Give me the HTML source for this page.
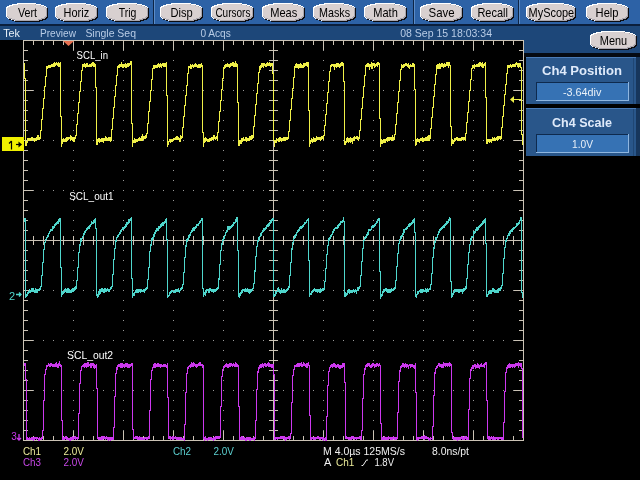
<!DOCTYPE html>
<html><head><meta charset="utf-8"><style>
html,body{margin:0;padding:0;width:640px;height:480px;overflow:hidden;background:#000}
svg{position:absolute;left:0;top:0;display:block;will-change:transform}
text{font-family:"Liberation Sans",sans-serif}
</style></head><body>
<svg width="640" height="480" viewBox="0 0 640 480">
<g shape-rendering="crispEdges">
<rect x="0" y="0" width="640" height="24" fill="#2d62a6"/><rect x="0" y="24" width="640" height="2" fill="#0b1f3c"/><rect x="0" y="26" width="640" height="14" fill="#1d4779"/><rect x="524" y="40" width="116" height="13" fill="#1d4779"/><rect x="524" y="53" width="116" height="4" fill="#050a12"/><rect x="153" y="0" width="1" height="24" fill="#0d2444"/><rect x="154" y="0" width="1" height="24" fill="#5b8cc8"/><rect x="413" y="0" width="1" height="24" fill="#0d2444"/><rect x="414" y="0" width="1" height="24" fill="#5b8cc8"/><rect x="518" y="0" width="1" height="24" fill="#0d2444"/><rect x="519" y="0" width="1" height="24" fill="#5b8cc8"/><path fill="#0c0c10" d="M18 4h19v1h-19zM13 5h29v1h-29zM10 6h35v1h-35zM8 7h39v1h-39zM7 8h41v1h-41zM7 9h41v1h-41zM7 10h41v1h-41zM7 11h41v1h-41zM7 12h41v1h-41zM7 13h41v1h-41zM7 14h41v1h-41zM7 15h41v1h-41zM7 16h41v1h-41zM7 17h41v1h-41zM8 18h39v1h-39zM9 19h37v1h-37zM12 20h31v1h-31zM15 21h25v1h-25z"/><path fill="#ffffff" d="M17 3h19v1h-19zM12 4h29v1h-29zM9 5h35v1h-35zM7 6h39v1h-39zM6 7h41v1h-41zM6 8h41v1h-41zM6 9h41v1h-41zM6 10h41v1h-41zM6 11h41v1h-41zM6 12h41v1h-41zM6 13h41v1h-41zM6 14h41v1h-41zM6 15h41v1h-41zM6 16h41v1h-41zM7 17h39v1h-39zM8 18h37v1h-37zM11 19h31v1h-31zM14 20h25v1h-25z"/><path fill="#a9a6ae" d="M18 4h18v1h-18zM13 5h28v1h-28zM10 6h34v1h-34zM8 7h38v1h-38zM7 8h40v1h-40zM7 9h40v1h-40zM7 10h40v1h-40zM7 11h40v1h-40zM7 12h40v1h-40zM7 13h40v1h-40zM7 14h40v1h-40zM7 15h40v1h-40zM7 16h40v1h-40zM8 17h38v1h-38zM9 18h36v1h-36zM12 19h30v1h-30zM15 20h24v1h-24z"/><path fill="#d8d0d0" d="M18 4h17v1h-17zM13 5h27v1h-27zM10 6h33v1h-33zM8 7h37v1h-37zM7 8h39v1h-39zM7 9h39v1h-39zM7 10h39v1h-39zM7 11h39v1h-39zM7 12h39v1h-39zM7 13h39v1h-39zM7 14h39v1h-39zM7 15h39v1h-39zM8 16h37v1h-37zM9 17h35v1h-35zM12 18h29v1h-29zM15 19h23v1h-23z"/><path fill="#0c0c10" d="M67 4h20v1h-20zM62 5h30v1h-30zM59 6h36v1h-36zM57 7h40v1h-40zM56 8h42v1h-42zM56 9h42v1h-42zM56 10h42v1h-42zM56 11h42v1h-42zM56 12h42v1h-42zM56 13h42v1h-42zM56 14h42v1h-42zM56 15h42v1h-42zM56 16h42v1h-42zM56 17h42v1h-42zM57 18h40v1h-40zM58 19h38v1h-38zM61 20h32v1h-32zM64 21h26v1h-26z"/><path fill="#ffffff" d="M66 3h20v1h-20zM61 4h30v1h-30zM58 5h36v1h-36zM56 6h40v1h-40zM55 7h42v1h-42zM55 8h42v1h-42zM55 9h42v1h-42zM55 10h42v1h-42zM55 11h42v1h-42zM55 12h42v1h-42zM55 13h42v1h-42zM55 14h42v1h-42zM55 15h42v1h-42zM55 16h42v1h-42zM56 17h40v1h-40zM57 18h38v1h-38zM60 19h32v1h-32zM63 20h26v1h-26z"/><path fill="#a9a6ae" d="M67 4h19v1h-19zM62 5h29v1h-29zM59 6h35v1h-35zM57 7h39v1h-39zM56 8h41v1h-41zM56 9h41v1h-41zM56 10h41v1h-41zM56 11h41v1h-41zM56 12h41v1h-41zM56 13h41v1h-41zM56 14h41v1h-41zM56 15h41v1h-41zM56 16h41v1h-41zM57 17h39v1h-39zM58 18h37v1h-37zM61 19h31v1h-31zM64 20h25v1h-25z"/><path fill="#d8d0d0" d="M67 4h18v1h-18zM62 5h28v1h-28zM59 6h34v1h-34zM57 7h38v1h-38zM56 8h40v1h-40zM56 9h40v1h-40zM56 10h40v1h-40zM56 11h40v1h-40zM56 12h40v1h-40zM56 13h40v1h-40zM56 14h40v1h-40zM56 15h40v1h-40zM57 16h38v1h-38zM58 17h36v1h-36zM61 18h30v1h-30zM64 19h24v1h-24z"/><path fill="#0c0c10" d="M118 4h20v1h-20zM113 5h30v1h-30zM110 6h36v1h-36zM108 7h40v1h-40zM107 8h42v1h-42zM107 9h42v1h-42zM107 10h42v1h-42zM107 11h42v1h-42zM107 12h42v1h-42zM107 13h42v1h-42zM107 14h42v1h-42zM107 15h42v1h-42zM107 16h42v1h-42zM107 17h42v1h-42zM108 18h40v1h-40zM109 19h38v1h-38zM112 20h32v1h-32zM115 21h26v1h-26z"/><path fill="#ffffff" d="M117 3h20v1h-20zM112 4h30v1h-30zM109 5h36v1h-36zM107 6h40v1h-40zM106 7h42v1h-42zM106 8h42v1h-42zM106 9h42v1h-42zM106 10h42v1h-42zM106 11h42v1h-42zM106 12h42v1h-42zM106 13h42v1h-42zM106 14h42v1h-42zM106 15h42v1h-42zM106 16h42v1h-42zM107 17h40v1h-40zM108 18h38v1h-38zM111 19h32v1h-32zM114 20h26v1h-26z"/><path fill="#a9a6ae" d="M118 4h19v1h-19zM113 5h29v1h-29zM110 6h35v1h-35zM108 7h39v1h-39zM107 8h41v1h-41zM107 9h41v1h-41zM107 10h41v1h-41zM107 11h41v1h-41zM107 12h41v1h-41zM107 13h41v1h-41zM107 14h41v1h-41zM107 15h41v1h-41zM107 16h41v1h-41zM108 17h39v1h-39zM109 18h37v1h-37zM112 19h31v1h-31zM115 20h25v1h-25z"/><path fill="#d8d0d0" d="M118 4h18v1h-18zM113 5h28v1h-28zM110 6h34v1h-34zM108 7h38v1h-38zM107 8h40v1h-40zM107 9h40v1h-40zM107 10h40v1h-40zM107 11h40v1h-40zM107 12h40v1h-40zM107 13h40v1h-40zM107 14h40v1h-40zM107 15h40v1h-40zM108 16h38v1h-38zM109 17h36v1h-36zM112 18h30v1h-30zM115 19h24v1h-24z"/><path fill="#0c0c10" d="M172 4h20v1h-20zM167 5h30v1h-30zM164 6h36v1h-36zM162 7h40v1h-40zM161 8h42v1h-42zM161 9h42v1h-42zM161 10h42v1h-42zM161 11h42v1h-42zM161 12h42v1h-42zM161 13h42v1h-42zM161 14h42v1h-42zM161 15h42v1h-42zM161 16h42v1h-42zM161 17h42v1h-42zM162 18h40v1h-40zM163 19h38v1h-38zM166 20h32v1h-32zM169 21h26v1h-26z"/><path fill="#ffffff" d="M171 3h20v1h-20zM166 4h30v1h-30zM163 5h36v1h-36zM161 6h40v1h-40zM160 7h42v1h-42zM160 8h42v1h-42zM160 9h42v1h-42zM160 10h42v1h-42zM160 11h42v1h-42zM160 12h42v1h-42zM160 13h42v1h-42zM160 14h42v1h-42zM160 15h42v1h-42zM160 16h42v1h-42zM161 17h40v1h-40zM162 18h38v1h-38zM165 19h32v1h-32zM168 20h26v1h-26z"/><path fill="#a9a6ae" d="M172 4h19v1h-19zM167 5h29v1h-29zM164 6h35v1h-35zM162 7h39v1h-39zM161 8h41v1h-41zM161 9h41v1h-41zM161 10h41v1h-41zM161 11h41v1h-41zM161 12h41v1h-41zM161 13h41v1h-41zM161 14h41v1h-41zM161 15h41v1h-41zM161 16h41v1h-41zM162 17h39v1h-39zM163 18h37v1h-37zM166 19h31v1h-31zM169 20h25v1h-25z"/><path fill="#d8d0d0" d="M172 4h18v1h-18zM167 5h28v1h-28zM164 6h34v1h-34zM162 7h38v1h-38zM161 8h40v1h-40zM161 9h40v1h-40zM161 10h40v1h-40zM161 11h40v1h-40zM161 12h40v1h-40zM161 13h40v1h-40zM161 14h40v1h-40zM161 15h40v1h-40zM162 16h38v1h-38zM163 17h36v1h-36zM166 18h30v1h-30zM169 19h24v1h-24z"/><path fill="#0c0c10" d="M223 4h20v1h-20zM218 5h30v1h-30zM215 6h36v1h-36zM213 7h40v1h-40zM212 8h42v1h-42zM212 9h42v1h-42zM212 10h42v1h-42zM212 11h42v1h-42zM212 12h42v1h-42zM212 13h42v1h-42zM212 14h42v1h-42zM212 15h42v1h-42zM212 16h42v1h-42zM212 17h42v1h-42zM213 18h40v1h-40zM214 19h38v1h-38zM217 20h32v1h-32zM220 21h26v1h-26z"/><path fill="#ffffff" d="M222 3h20v1h-20zM217 4h30v1h-30zM214 5h36v1h-36zM212 6h40v1h-40zM211 7h42v1h-42zM211 8h42v1h-42zM211 9h42v1h-42zM211 10h42v1h-42zM211 11h42v1h-42zM211 12h42v1h-42zM211 13h42v1h-42zM211 14h42v1h-42zM211 15h42v1h-42zM211 16h42v1h-42zM212 17h40v1h-40zM213 18h38v1h-38zM216 19h32v1h-32zM219 20h26v1h-26z"/><path fill="#a9a6ae" d="M223 4h19v1h-19zM218 5h29v1h-29zM215 6h35v1h-35zM213 7h39v1h-39zM212 8h41v1h-41zM212 9h41v1h-41zM212 10h41v1h-41zM212 11h41v1h-41zM212 12h41v1h-41zM212 13h41v1h-41zM212 14h41v1h-41zM212 15h41v1h-41zM212 16h41v1h-41zM213 17h39v1h-39zM214 18h37v1h-37zM217 19h31v1h-31zM220 20h25v1h-25z"/><path fill="#d8d0d0" d="M223 4h18v1h-18zM218 5h28v1h-28zM215 6h34v1h-34zM213 7h38v1h-38zM212 8h40v1h-40zM212 9h40v1h-40zM212 10h40v1h-40zM212 11h40v1h-40zM212 12h40v1h-40zM212 13h40v1h-40zM212 14h40v1h-40zM212 15h40v1h-40zM213 16h38v1h-38zM214 17h36v1h-36zM217 18h30v1h-30zM220 19h24v1h-24z"/><path fill="#0c0c10" d="M274 4h20v1h-20zM269 5h30v1h-30zM266 6h36v1h-36zM264 7h40v1h-40zM263 8h42v1h-42zM263 9h42v1h-42zM263 10h42v1h-42zM263 11h42v1h-42zM263 12h42v1h-42zM263 13h42v1h-42zM263 14h42v1h-42zM263 15h42v1h-42zM263 16h42v1h-42zM263 17h42v1h-42zM264 18h40v1h-40zM265 19h38v1h-38zM268 20h32v1h-32zM271 21h26v1h-26z"/><path fill="#ffffff" d="M273 3h20v1h-20zM268 4h30v1h-30zM265 5h36v1h-36zM263 6h40v1h-40zM262 7h42v1h-42zM262 8h42v1h-42zM262 9h42v1h-42zM262 10h42v1h-42zM262 11h42v1h-42zM262 12h42v1h-42zM262 13h42v1h-42zM262 14h42v1h-42zM262 15h42v1h-42zM262 16h42v1h-42zM263 17h40v1h-40zM264 18h38v1h-38zM267 19h32v1h-32zM270 20h26v1h-26z"/><path fill="#a9a6ae" d="M274 4h19v1h-19zM269 5h29v1h-29zM266 6h35v1h-35zM264 7h39v1h-39zM263 8h41v1h-41zM263 9h41v1h-41zM263 10h41v1h-41zM263 11h41v1h-41zM263 12h41v1h-41zM263 13h41v1h-41zM263 14h41v1h-41zM263 15h41v1h-41zM263 16h41v1h-41zM264 17h39v1h-39zM265 18h37v1h-37zM268 19h31v1h-31zM271 20h25v1h-25z"/><path fill="#d8d0d0" d="M274 4h18v1h-18zM269 5h28v1h-28zM266 6h34v1h-34zM264 7h38v1h-38zM263 8h40v1h-40zM263 9h40v1h-40zM263 10h40v1h-40zM263 11h40v1h-40zM263 12h40v1h-40zM263 13h40v1h-40zM263 14h40v1h-40zM263 15h40v1h-40zM264 16h38v1h-38zM265 17h36v1h-36zM268 18h30v1h-30zM271 19h24v1h-24z"/><path fill="#0c0c10" d="M325 4h20v1h-20zM320 5h30v1h-30zM317 6h36v1h-36zM315 7h40v1h-40zM314 8h42v1h-42zM314 9h42v1h-42zM314 10h42v1h-42zM314 11h42v1h-42zM314 12h42v1h-42zM314 13h42v1h-42zM314 14h42v1h-42zM314 15h42v1h-42zM314 16h42v1h-42zM314 17h42v1h-42zM315 18h40v1h-40zM316 19h38v1h-38zM319 20h32v1h-32zM322 21h26v1h-26z"/><path fill="#ffffff" d="M324 3h20v1h-20zM319 4h30v1h-30zM316 5h36v1h-36zM314 6h40v1h-40zM313 7h42v1h-42zM313 8h42v1h-42zM313 9h42v1h-42zM313 10h42v1h-42zM313 11h42v1h-42zM313 12h42v1h-42zM313 13h42v1h-42zM313 14h42v1h-42zM313 15h42v1h-42zM313 16h42v1h-42zM314 17h40v1h-40zM315 18h38v1h-38zM318 19h32v1h-32zM321 20h26v1h-26z"/><path fill="#a9a6ae" d="M325 4h19v1h-19zM320 5h29v1h-29zM317 6h35v1h-35zM315 7h39v1h-39zM314 8h41v1h-41zM314 9h41v1h-41zM314 10h41v1h-41zM314 11h41v1h-41zM314 12h41v1h-41zM314 13h41v1h-41zM314 14h41v1h-41zM314 15h41v1h-41zM314 16h41v1h-41zM315 17h39v1h-39zM316 18h37v1h-37zM319 19h31v1h-31zM322 20h25v1h-25z"/><path fill="#d8d0d0" d="M325 4h18v1h-18zM320 5h28v1h-28zM317 6h34v1h-34zM315 7h38v1h-38zM314 8h40v1h-40zM314 9h40v1h-40zM314 10h40v1h-40zM314 11h40v1h-40zM314 12h40v1h-40zM314 13h40v1h-40zM314 14h40v1h-40zM314 15h40v1h-40zM315 16h38v1h-38zM316 17h36v1h-36zM319 18h30v1h-30zM322 19h24v1h-24z"/><path fill="#0c0c10" d="M376 4h20v1h-20zM371 5h30v1h-30zM368 6h36v1h-36zM366 7h40v1h-40zM365 8h42v1h-42zM365 9h42v1h-42zM365 10h42v1h-42zM365 11h42v1h-42zM365 12h42v1h-42zM365 13h42v1h-42zM365 14h42v1h-42zM365 15h42v1h-42zM365 16h42v1h-42zM365 17h42v1h-42zM366 18h40v1h-40zM367 19h38v1h-38zM370 20h32v1h-32zM373 21h26v1h-26z"/><path fill="#ffffff" d="M375 3h20v1h-20zM370 4h30v1h-30zM367 5h36v1h-36zM365 6h40v1h-40zM364 7h42v1h-42zM364 8h42v1h-42zM364 9h42v1h-42zM364 10h42v1h-42zM364 11h42v1h-42zM364 12h42v1h-42zM364 13h42v1h-42zM364 14h42v1h-42zM364 15h42v1h-42zM364 16h42v1h-42zM365 17h40v1h-40zM366 18h38v1h-38zM369 19h32v1h-32zM372 20h26v1h-26z"/><path fill="#a9a6ae" d="M376 4h19v1h-19zM371 5h29v1h-29zM368 6h35v1h-35zM366 7h39v1h-39zM365 8h41v1h-41zM365 9h41v1h-41zM365 10h41v1h-41zM365 11h41v1h-41zM365 12h41v1h-41zM365 13h41v1h-41zM365 14h41v1h-41zM365 15h41v1h-41zM365 16h41v1h-41zM366 17h39v1h-39zM367 18h37v1h-37zM370 19h31v1h-31zM373 20h25v1h-25z"/><path fill="#d8d0d0" d="M376 4h18v1h-18zM371 5h28v1h-28zM368 6h34v1h-34zM366 7h38v1h-38zM365 8h40v1h-40zM365 9h40v1h-40zM365 10h40v1h-40zM365 11h40v1h-40zM365 12h40v1h-40zM365 13h40v1h-40zM365 14h40v1h-40zM365 15h40v1h-40zM366 16h38v1h-38zM367 17h36v1h-36zM370 18h30v1h-30zM373 19h24v1h-24z"/><path fill="#0c0c10" d="M432 4h20v1h-20zM427 5h30v1h-30zM424 6h36v1h-36zM422 7h40v1h-40zM421 8h42v1h-42zM421 9h42v1h-42zM421 10h42v1h-42zM421 11h42v1h-42zM421 12h42v1h-42zM421 13h42v1h-42zM421 14h42v1h-42zM421 15h42v1h-42zM421 16h42v1h-42zM421 17h42v1h-42zM422 18h40v1h-40zM423 19h38v1h-38zM426 20h32v1h-32zM429 21h26v1h-26z"/><path fill="#ffffff" d="M431 3h20v1h-20zM426 4h30v1h-30zM423 5h36v1h-36zM421 6h40v1h-40zM420 7h42v1h-42zM420 8h42v1h-42zM420 9h42v1h-42zM420 10h42v1h-42zM420 11h42v1h-42zM420 12h42v1h-42zM420 13h42v1h-42zM420 14h42v1h-42zM420 15h42v1h-42zM420 16h42v1h-42zM421 17h40v1h-40zM422 18h38v1h-38zM425 19h32v1h-32zM428 20h26v1h-26z"/><path fill="#a9a6ae" d="M432 4h19v1h-19zM427 5h29v1h-29zM424 6h35v1h-35zM422 7h39v1h-39zM421 8h41v1h-41zM421 9h41v1h-41zM421 10h41v1h-41zM421 11h41v1h-41zM421 12h41v1h-41zM421 13h41v1h-41zM421 14h41v1h-41zM421 15h41v1h-41zM421 16h41v1h-41zM422 17h39v1h-39zM423 18h37v1h-37zM426 19h31v1h-31zM429 20h25v1h-25z"/><path fill="#d8d0d0" d="M432 4h18v1h-18zM427 5h28v1h-28zM424 6h34v1h-34zM422 7h38v1h-38zM421 8h40v1h-40zM421 9h40v1h-40zM421 10h40v1h-40zM421 11h40v1h-40zM421 12h40v1h-40zM421 13h40v1h-40zM421 14h40v1h-40zM421 15h40v1h-40zM422 16h38v1h-38zM423 17h36v1h-36zM426 18h30v1h-30zM429 19h24v1h-24z"/><path fill="#0c0c10" d="M483 4h20v1h-20zM478 5h30v1h-30zM475 6h36v1h-36zM473 7h40v1h-40zM472 8h42v1h-42zM472 9h42v1h-42zM472 10h42v1h-42zM472 11h42v1h-42zM472 12h42v1h-42zM472 13h42v1h-42zM472 14h42v1h-42zM472 15h42v1h-42zM472 16h42v1h-42zM472 17h42v1h-42zM473 18h40v1h-40zM474 19h38v1h-38zM477 20h32v1h-32zM480 21h26v1h-26z"/><path fill="#ffffff" d="M482 3h20v1h-20zM477 4h30v1h-30zM474 5h36v1h-36zM472 6h40v1h-40zM471 7h42v1h-42zM471 8h42v1h-42zM471 9h42v1h-42zM471 10h42v1h-42zM471 11h42v1h-42zM471 12h42v1h-42zM471 13h42v1h-42zM471 14h42v1h-42zM471 15h42v1h-42zM471 16h42v1h-42zM472 17h40v1h-40zM473 18h38v1h-38zM476 19h32v1h-32zM479 20h26v1h-26z"/><path fill="#a9a6ae" d="M483 4h19v1h-19zM478 5h29v1h-29zM475 6h35v1h-35zM473 7h39v1h-39zM472 8h41v1h-41zM472 9h41v1h-41zM472 10h41v1h-41zM472 11h41v1h-41zM472 12h41v1h-41zM472 13h41v1h-41zM472 14h41v1h-41zM472 15h41v1h-41zM472 16h41v1h-41zM473 17h39v1h-39zM474 18h37v1h-37zM477 19h31v1h-31zM480 20h25v1h-25z"/><path fill="#d8d0d0" d="M483 4h18v1h-18zM478 5h28v1h-28zM475 6h34v1h-34zM473 7h38v1h-38zM472 8h40v1h-40zM472 9h40v1h-40zM472 10h40v1h-40zM472 11h40v1h-40zM472 12h40v1h-40zM472 13h40v1h-40zM472 14h40v1h-40zM472 15h40v1h-40zM473 16h38v1h-38zM474 17h36v1h-36zM477 18h30v1h-30zM480 19h24v1h-24z"/><path fill="#0c0c10" d="M538 4h27v1h-27zM533 5h37v1h-37zM530 6h43v1h-43zM528 7h47v1h-47zM527 8h49v1h-49zM527 9h49v1h-49zM527 10h49v1h-49zM527 11h49v1h-49zM527 12h49v1h-49zM527 13h49v1h-49zM527 14h49v1h-49zM527 15h49v1h-49zM527 16h49v1h-49zM527 17h49v1h-49zM528 18h47v1h-47zM529 19h45v1h-45zM532 20h39v1h-39zM535 21h33v1h-33z"/><path fill="#ffffff" d="M537 3h27v1h-27zM532 4h37v1h-37zM529 5h43v1h-43zM527 6h47v1h-47zM526 7h49v1h-49zM526 8h49v1h-49zM526 9h49v1h-49zM526 10h49v1h-49zM526 11h49v1h-49zM526 12h49v1h-49zM526 13h49v1h-49zM526 14h49v1h-49zM526 15h49v1h-49zM526 16h49v1h-49zM527 17h47v1h-47zM528 18h45v1h-45zM531 19h39v1h-39zM534 20h33v1h-33z"/><path fill="#a9a6ae" d="M538 4h26v1h-26zM533 5h36v1h-36zM530 6h42v1h-42zM528 7h46v1h-46zM527 8h48v1h-48zM527 9h48v1h-48zM527 10h48v1h-48zM527 11h48v1h-48zM527 12h48v1h-48zM527 13h48v1h-48zM527 14h48v1h-48zM527 15h48v1h-48zM527 16h48v1h-48zM528 17h46v1h-46zM529 18h44v1h-44zM532 19h38v1h-38zM535 20h32v1h-32z"/><path fill="#d8d0d0" d="M538 4h25v1h-25zM533 5h35v1h-35zM530 6h41v1h-41zM528 7h45v1h-45zM527 8h47v1h-47zM527 9h47v1h-47zM527 10h47v1h-47zM527 11h47v1h-47zM527 12h47v1h-47zM527 13h47v1h-47zM527 14h47v1h-47zM527 15h47v1h-47zM528 16h45v1h-45zM529 17h43v1h-43zM532 18h37v1h-37zM535 19h31v1h-31z"/><path fill="#0c0c10" d="M598 4h20v1h-20zM593 5h30v1h-30zM590 6h36v1h-36zM588 7h40v1h-40zM587 8h42v1h-42zM587 9h42v1h-42zM587 10h42v1h-42zM587 11h42v1h-42zM587 12h42v1h-42zM587 13h42v1h-42zM587 14h42v1h-42zM587 15h42v1h-42zM587 16h42v1h-42zM587 17h42v1h-42zM588 18h40v1h-40zM589 19h38v1h-38zM592 20h32v1h-32zM595 21h26v1h-26z"/><path fill="#ffffff" d="M597 3h20v1h-20zM592 4h30v1h-30zM589 5h36v1h-36zM587 6h40v1h-40zM586 7h42v1h-42zM586 8h42v1h-42zM586 9h42v1h-42zM586 10h42v1h-42zM586 11h42v1h-42zM586 12h42v1h-42zM586 13h42v1h-42zM586 14h42v1h-42zM586 15h42v1h-42zM586 16h42v1h-42zM587 17h40v1h-40zM588 18h38v1h-38zM591 19h32v1h-32zM594 20h26v1h-26z"/><path fill="#a9a6ae" d="M598 4h19v1h-19zM593 5h29v1h-29zM590 6h35v1h-35zM588 7h39v1h-39zM587 8h41v1h-41zM587 9h41v1h-41zM587 10h41v1h-41zM587 11h41v1h-41zM587 12h41v1h-41zM587 13h41v1h-41zM587 14h41v1h-41zM587 15h41v1h-41zM587 16h41v1h-41zM588 17h39v1h-39zM589 18h37v1h-37zM592 19h31v1h-31zM595 20h25v1h-25z"/><path fill="#d8d0d0" d="M598 4h18v1h-18zM593 5h28v1h-28zM590 6h34v1h-34zM588 7h38v1h-38zM587 8h40v1h-40zM587 9h40v1h-40zM587 10h40v1h-40zM587 11h40v1h-40zM587 12h40v1h-40zM587 13h40v1h-40zM587 14h40v1h-40zM587 15h40v1h-40zM588 16h38v1h-38zM589 17h36v1h-36zM592 18h30v1h-30zM595 19h24v1h-24z"/><path fill="#0c0c10" d="M602 32h24v1h-24zM597 33h34v1h-34zM594 34h40v1h-40zM592 35h44v1h-44zM591 36h46v1h-46zM591 37h46v1h-46zM591 38h46v1h-46zM591 39h46v1h-46zM591 40h46v1h-46zM591 41h46v1h-46zM591 42h46v1h-46zM591 43h46v1h-46zM591 44h46v1h-46zM591 45h46v1h-46zM592 46h44v1h-44zM593 47h42v1h-42zM596 48h36v1h-36zM599 49h30v1h-30z"/><path fill="#ffffff" d="M601 31h24v1h-24zM596 32h34v1h-34zM593 33h40v1h-40zM591 34h44v1h-44zM590 35h46v1h-46zM590 36h46v1h-46zM590 37h46v1h-46zM590 38h46v1h-46zM590 39h46v1h-46zM590 40h46v1h-46zM590 41h46v1h-46zM590 42h46v1h-46zM590 43h46v1h-46zM590 44h46v1h-46zM591 45h44v1h-44zM592 46h42v1h-42zM595 47h36v1h-36zM598 48h30v1h-30z"/><path fill="#a9a6ae" d="M602 32h23v1h-23zM597 33h33v1h-33zM594 34h39v1h-39zM592 35h43v1h-43zM591 36h45v1h-45zM591 37h45v1h-45zM591 38h45v1h-45zM591 39h45v1h-45zM591 40h45v1h-45zM591 41h45v1h-45zM591 42h45v1h-45zM591 43h45v1h-45zM591 44h45v1h-45zM592 45h43v1h-43zM593 46h41v1h-41zM596 47h35v1h-35zM599 48h29v1h-29z"/><path fill="#d8d0d0" d="M602 32h22v1h-22zM597 33h32v1h-32zM594 34h38v1h-38zM592 35h42v1h-42zM591 36h44v1h-44zM591 37h44v1h-44zM591 38h44v1h-44zM591 39h44v1h-44zM591 40h44v1h-44zM591 41h44v1h-44zM591 42h44v1h-44zM591 43h44v1h-44zM592 44h42v1h-42zM593 45h40v1h-40zM596 46h34v1h-34zM599 47h28v1h-28z"/><rect x="526" y="57" width="110" height="47" fill="#29568a"/><rect x="526" y="57" width="110" height="1" fill="#4a7cb8"/><rect x="633" y="58" width="1" height="46" fill="#1f4674"/><rect x="636" y="57" width="4" height="47" fill="#17365c"/><rect x="524" y="104" width="116" height="4" fill="#000"/><rect x="526" y="108" width="110" height="48" fill="#29568a"/><rect x="526" y="108" width="110" height="1" fill="#4a7cb8"/><rect x="633" y="109" width="1" height="47" fill="#1f4674"/><rect x="636" y="108" width="4" height="48" fill="#17365c"/><rect x="536" y="82" width="93" height="19" fill="#8fb6e0"/><rect x="536" y="82" width="92" height="18" fill="#0e2a4e"/><rect x="537" y="83" width="91" height="17" fill="#3672b4"/><rect x="536" y="134" width="93" height="19" fill="#8fb6e0"/><rect x="536" y="134" width="92" height="18" fill="#0e2a4e"/><rect x="537" y="135" width="91" height="17" fill="#3672b4"/>
<path fill="#9a9a9a" d="M73 50h1v1h-1zM73 60h1v1h-1zM73 70h1v1h-1zM73 80h1v1h-1zM73 90h1v1h-1zM73 100h1v1h-1zM73 110h1v1h-1zM73 120h1v1h-1zM73 130h1v1h-1zM73 140h1v1h-1zM73 150h1v1h-1zM73 160h1v1h-1zM73 170h1v1h-1zM73 180h1v1h-1zM73 190h1v1h-1zM73 200h1v1h-1zM73 210h1v1h-1zM73 220h1v1h-1zM73 230h1v1h-1zM73 240h1v1h-1zM73 250h1v1h-1zM73 260h1v1h-1zM73 270h1v1h-1zM73 280h1v1h-1zM73 290h1v1h-1zM73 300h1v1h-1zM73 310h1v1h-1zM73 320h1v1h-1zM73 330h1v1h-1zM73 340h1v1h-1zM73 350h1v1h-1zM73 360h1v1h-1zM73 370h1v1h-1zM73 380h1v1h-1zM73 390h1v1h-1zM73 400h1v1h-1zM73 410h1v1h-1zM73 420h1v1h-1zM73 430h1v1h-1zM123 50h1v1h-1zM123 60h1v1h-1zM123 70h1v1h-1zM123 80h1v1h-1zM123 90h1v1h-1zM123 100h1v1h-1zM123 110h1v1h-1zM123 120h1v1h-1zM123 130h1v1h-1zM123 140h1v1h-1zM123 150h1v1h-1zM123 160h1v1h-1zM123 170h1v1h-1zM123 180h1v1h-1zM123 190h1v1h-1zM123 200h1v1h-1zM123 210h1v1h-1zM123 220h1v1h-1zM123 230h1v1h-1zM123 240h1v1h-1zM123 250h1v1h-1zM123 260h1v1h-1zM123 270h1v1h-1zM123 280h1v1h-1zM123 290h1v1h-1zM123 300h1v1h-1zM123 310h1v1h-1zM123 320h1v1h-1zM123 330h1v1h-1zM123 340h1v1h-1zM123 350h1v1h-1zM123 360h1v1h-1zM123 370h1v1h-1zM123 380h1v1h-1zM123 390h1v1h-1zM123 400h1v1h-1zM123 410h1v1h-1zM123 420h1v1h-1zM123 430h1v1h-1zM173 50h1v1h-1zM173 60h1v1h-1zM173 70h1v1h-1zM173 80h1v1h-1zM173 90h1v1h-1zM173 100h1v1h-1zM173 110h1v1h-1zM173 120h1v1h-1zM173 130h1v1h-1zM173 140h1v1h-1zM173 150h1v1h-1zM173 160h1v1h-1zM173 170h1v1h-1zM173 180h1v1h-1zM173 190h1v1h-1zM173 200h1v1h-1zM173 210h1v1h-1zM173 220h1v1h-1zM173 230h1v1h-1zM173 240h1v1h-1zM173 250h1v1h-1zM173 260h1v1h-1zM173 270h1v1h-1zM173 280h1v1h-1zM173 290h1v1h-1zM173 300h1v1h-1zM173 310h1v1h-1zM173 320h1v1h-1zM173 330h1v1h-1zM173 340h1v1h-1zM173 350h1v1h-1zM173 360h1v1h-1zM173 370h1v1h-1zM173 380h1v1h-1zM173 390h1v1h-1zM173 400h1v1h-1zM173 410h1v1h-1zM173 420h1v1h-1zM173 430h1v1h-1zM223 50h1v1h-1zM223 60h1v1h-1zM223 70h1v1h-1zM223 80h1v1h-1zM223 90h1v1h-1zM223 100h1v1h-1zM223 110h1v1h-1zM223 120h1v1h-1zM223 130h1v1h-1zM223 140h1v1h-1zM223 150h1v1h-1zM223 160h1v1h-1zM223 170h1v1h-1zM223 180h1v1h-1zM223 190h1v1h-1zM223 200h1v1h-1zM223 210h1v1h-1zM223 220h1v1h-1zM223 230h1v1h-1zM223 240h1v1h-1zM223 250h1v1h-1zM223 260h1v1h-1zM223 270h1v1h-1zM223 280h1v1h-1zM223 290h1v1h-1zM223 300h1v1h-1zM223 310h1v1h-1zM223 320h1v1h-1zM223 330h1v1h-1zM223 340h1v1h-1zM223 350h1v1h-1zM223 360h1v1h-1zM223 370h1v1h-1zM223 380h1v1h-1zM223 390h1v1h-1zM223 400h1v1h-1zM223 410h1v1h-1zM223 420h1v1h-1zM223 430h1v1h-1zM323 50h1v1h-1zM323 60h1v1h-1zM323 70h1v1h-1zM323 80h1v1h-1zM323 90h1v1h-1zM323 100h1v1h-1zM323 110h1v1h-1zM323 120h1v1h-1zM323 130h1v1h-1zM323 140h1v1h-1zM323 150h1v1h-1zM323 160h1v1h-1zM323 170h1v1h-1zM323 180h1v1h-1zM323 190h1v1h-1zM323 200h1v1h-1zM323 210h1v1h-1zM323 220h1v1h-1zM323 230h1v1h-1zM323 240h1v1h-1zM323 250h1v1h-1zM323 260h1v1h-1zM323 270h1v1h-1zM323 280h1v1h-1zM323 290h1v1h-1zM323 300h1v1h-1zM323 310h1v1h-1zM323 320h1v1h-1zM323 330h1v1h-1zM323 340h1v1h-1zM323 350h1v1h-1zM323 360h1v1h-1zM323 370h1v1h-1zM323 380h1v1h-1zM323 390h1v1h-1zM323 400h1v1h-1zM323 410h1v1h-1zM323 420h1v1h-1zM323 430h1v1h-1zM373 50h1v1h-1zM373 60h1v1h-1zM373 70h1v1h-1zM373 80h1v1h-1zM373 90h1v1h-1zM373 100h1v1h-1zM373 110h1v1h-1zM373 120h1v1h-1zM373 130h1v1h-1zM373 140h1v1h-1zM373 150h1v1h-1zM373 160h1v1h-1zM373 170h1v1h-1zM373 180h1v1h-1zM373 190h1v1h-1zM373 200h1v1h-1zM373 210h1v1h-1zM373 220h1v1h-1zM373 230h1v1h-1zM373 240h1v1h-1zM373 250h1v1h-1zM373 260h1v1h-1zM373 270h1v1h-1zM373 280h1v1h-1zM373 290h1v1h-1zM373 300h1v1h-1zM373 310h1v1h-1zM373 320h1v1h-1zM373 330h1v1h-1zM373 340h1v1h-1zM373 350h1v1h-1zM373 360h1v1h-1zM373 370h1v1h-1zM373 380h1v1h-1zM373 390h1v1h-1zM373 400h1v1h-1zM373 410h1v1h-1zM373 420h1v1h-1zM373 430h1v1h-1zM423 50h1v1h-1zM423 60h1v1h-1zM423 70h1v1h-1zM423 80h1v1h-1zM423 90h1v1h-1zM423 100h1v1h-1zM423 110h1v1h-1zM423 120h1v1h-1zM423 130h1v1h-1zM423 140h1v1h-1zM423 150h1v1h-1zM423 160h1v1h-1zM423 170h1v1h-1zM423 180h1v1h-1zM423 190h1v1h-1zM423 200h1v1h-1zM423 210h1v1h-1zM423 220h1v1h-1zM423 230h1v1h-1zM423 240h1v1h-1zM423 250h1v1h-1zM423 260h1v1h-1zM423 270h1v1h-1zM423 280h1v1h-1zM423 290h1v1h-1zM423 300h1v1h-1zM423 310h1v1h-1zM423 320h1v1h-1zM423 330h1v1h-1zM423 340h1v1h-1zM423 350h1v1h-1zM423 360h1v1h-1zM423 370h1v1h-1zM423 380h1v1h-1zM423 390h1v1h-1zM423 400h1v1h-1zM423 410h1v1h-1zM423 420h1v1h-1zM423 430h1v1h-1zM473 50h1v1h-1zM473 60h1v1h-1zM473 70h1v1h-1zM473 80h1v1h-1zM473 90h1v1h-1zM473 100h1v1h-1zM473 110h1v1h-1zM473 120h1v1h-1zM473 130h1v1h-1zM473 140h1v1h-1zM473 150h1v1h-1zM473 160h1v1h-1zM473 170h1v1h-1zM473 180h1v1h-1zM473 190h1v1h-1zM473 200h1v1h-1zM473 210h1v1h-1zM473 220h1v1h-1zM473 230h1v1h-1zM473 240h1v1h-1zM473 250h1v1h-1zM473 260h1v1h-1zM473 270h1v1h-1zM473 280h1v1h-1zM473 290h1v1h-1zM473 300h1v1h-1zM473 310h1v1h-1zM473 320h1v1h-1zM473 330h1v1h-1zM473 340h1v1h-1zM473 350h1v1h-1zM473 360h1v1h-1zM473 370h1v1h-1zM473 380h1v1h-1zM473 390h1v1h-1zM473 400h1v1h-1zM473 410h1v1h-1zM473 420h1v1h-1zM473 430h1v1h-1zM33 90h1v1h-1zM43 90h1v1h-1zM53 90h1v1h-1zM63 90h1v1h-1zM73 90h1v1h-1zM83 90h1v1h-1zM93 90h1v1h-1zM103 90h1v1h-1zM113 90h1v1h-1zM123 90h1v1h-1zM133 90h1v1h-1zM143 90h1v1h-1zM153 90h1v1h-1zM163 90h1v1h-1zM173 90h1v1h-1zM183 90h1v1h-1zM193 90h1v1h-1zM203 90h1v1h-1zM213 90h1v1h-1zM223 90h1v1h-1zM233 90h1v1h-1zM243 90h1v1h-1zM253 90h1v1h-1zM263 90h1v1h-1zM273 90h1v1h-1zM283 90h1v1h-1zM293 90h1v1h-1zM303 90h1v1h-1zM313 90h1v1h-1zM323 90h1v1h-1zM333 90h1v1h-1zM343 90h1v1h-1zM353 90h1v1h-1zM363 90h1v1h-1zM373 90h1v1h-1zM383 90h1v1h-1zM393 90h1v1h-1zM403 90h1v1h-1zM413 90h1v1h-1zM423 90h1v1h-1zM433 90h1v1h-1zM443 90h1v1h-1zM453 90h1v1h-1zM463 90h1v1h-1zM473 90h1v1h-1zM483 90h1v1h-1zM493 90h1v1h-1zM503 90h1v1h-1zM513 90h1v1h-1zM33 140h1v1h-1zM43 140h1v1h-1zM53 140h1v1h-1zM63 140h1v1h-1zM73 140h1v1h-1zM83 140h1v1h-1zM93 140h1v1h-1zM103 140h1v1h-1zM113 140h1v1h-1zM123 140h1v1h-1zM133 140h1v1h-1zM143 140h1v1h-1zM153 140h1v1h-1zM163 140h1v1h-1zM173 140h1v1h-1zM183 140h1v1h-1zM193 140h1v1h-1zM203 140h1v1h-1zM213 140h1v1h-1zM223 140h1v1h-1zM233 140h1v1h-1zM243 140h1v1h-1zM253 140h1v1h-1zM263 140h1v1h-1zM273 140h1v1h-1zM283 140h1v1h-1zM293 140h1v1h-1zM303 140h1v1h-1zM313 140h1v1h-1zM323 140h1v1h-1zM333 140h1v1h-1zM343 140h1v1h-1zM353 140h1v1h-1zM363 140h1v1h-1zM373 140h1v1h-1zM383 140h1v1h-1zM393 140h1v1h-1zM403 140h1v1h-1zM413 140h1v1h-1zM423 140h1v1h-1zM433 140h1v1h-1zM443 140h1v1h-1zM453 140h1v1h-1zM463 140h1v1h-1zM473 140h1v1h-1zM483 140h1v1h-1zM493 140h1v1h-1zM503 140h1v1h-1zM513 140h1v1h-1zM33 190h1v1h-1zM43 190h1v1h-1zM53 190h1v1h-1zM63 190h1v1h-1zM73 190h1v1h-1zM83 190h1v1h-1zM93 190h1v1h-1zM103 190h1v1h-1zM113 190h1v1h-1zM123 190h1v1h-1zM133 190h1v1h-1zM143 190h1v1h-1zM153 190h1v1h-1zM163 190h1v1h-1zM173 190h1v1h-1zM183 190h1v1h-1zM193 190h1v1h-1zM203 190h1v1h-1zM213 190h1v1h-1zM223 190h1v1h-1zM233 190h1v1h-1zM243 190h1v1h-1zM253 190h1v1h-1zM263 190h1v1h-1zM273 190h1v1h-1zM283 190h1v1h-1zM293 190h1v1h-1zM303 190h1v1h-1zM313 190h1v1h-1zM323 190h1v1h-1zM333 190h1v1h-1zM343 190h1v1h-1zM353 190h1v1h-1zM363 190h1v1h-1zM373 190h1v1h-1zM383 190h1v1h-1zM393 190h1v1h-1zM403 190h1v1h-1zM413 190h1v1h-1zM423 190h1v1h-1zM433 190h1v1h-1zM443 190h1v1h-1zM453 190h1v1h-1zM463 190h1v1h-1zM473 190h1v1h-1zM483 190h1v1h-1zM493 190h1v1h-1zM503 190h1v1h-1zM513 190h1v1h-1zM33 290h1v1h-1zM43 290h1v1h-1zM53 290h1v1h-1zM63 290h1v1h-1zM73 290h1v1h-1zM83 290h1v1h-1zM93 290h1v1h-1zM103 290h1v1h-1zM113 290h1v1h-1zM123 290h1v1h-1zM133 290h1v1h-1zM143 290h1v1h-1zM153 290h1v1h-1zM163 290h1v1h-1zM173 290h1v1h-1zM183 290h1v1h-1zM193 290h1v1h-1zM203 290h1v1h-1zM213 290h1v1h-1zM223 290h1v1h-1zM233 290h1v1h-1zM243 290h1v1h-1zM253 290h1v1h-1zM263 290h1v1h-1zM273 290h1v1h-1zM283 290h1v1h-1zM293 290h1v1h-1zM303 290h1v1h-1zM313 290h1v1h-1zM323 290h1v1h-1zM333 290h1v1h-1zM343 290h1v1h-1zM353 290h1v1h-1zM363 290h1v1h-1zM373 290h1v1h-1zM383 290h1v1h-1zM393 290h1v1h-1zM403 290h1v1h-1zM413 290h1v1h-1zM423 290h1v1h-1zM433 290h1v1h-1zM443 290h1v1h-1zM453 290h1v1h-1zM463 290h1v1h-1zM473 290h1v1h-1zM483 290h1v1h-1zM493 290h1v1h-1zM503 290h1v1h-1zM513 290h1v1h-1zM33 340h1v1h-1zM43 340h1v1h-1zM53 340h1v1h-1zM63 340h1v1h-1zM73 340h1v1h-1zM83 340h1v1h-1zM93 340h1v1h-1zM103 340h1v1h-1zM113 340h1v1h-1zM123 340h1v1h-1zM133 340h1v1h-1zM143 340h1v1h-1zM153 340h1v1h-1zM163 340h1v1h-1zM173 340h1v1h-1zM183 340h1v1h-1zM193 340h1v1h-1zM203 340h1v1h-1zM213 340h1v1h-1zM223 340h1v1h-1zM233 340h1v1h-1zM243 340h1v1h-1zM253 340h1v1h-1zM263 340h1v1h-1zM273 340h1v1h-1zM283 340h1v1h-1zM293 340h1v1h-1zM303 340h1v1h-1zM313 340h1v1h-1zM323 340h1v1h-1zM333 340h1v1h-1zM343 340h1v1h-1zM353 340h1v1h-1zM363 340h1v1h-1zM373 340h1v1h-1zM383 340h1v1h-1zM393 340h1v1h-1zM403 340h1v1h-1zM413 340h1v1h-1zM423 340h1v1h-1zM433 340h1v1h-1zM443 340h1v1h-1zM453 340h1v1h-1zM463 340h1v1h-1zM473 340h1v1h-1zM483 340h1v1h-1zM493 340h1v1h-1zM503 340h1v1h-1zM513 340h1v1h-1zM33 390h1v1h-1zM43 390h1v1h-1zM53 390h1v1h-1zM63 390h1v1h-1zM73 390h1v1h-1zM83 390h1v1h-1zM93 390h1v1h-1zM103 390h1v1h-1zM113 390h1v1h-1zM123 390h1v1h-1zM133 390h1v1h-1zM143 390h1v1h-1zM153 390h1v1h-1zM163 390h1v1h-1zM173 390h1v1h-1zM183 390h1v1h-1zM193 390h1v1h-1zM203 390h1v1h-1zM213 390h1v1h-1zM223 390h1v1h-1zM233 390h1v1h-1zM243 390h1v1h-1zM253 390h1v1h-1zM263 390h1v1h-1zM273 390h1v1h-1zM283 390h1v1h-1zM293 390h1v1h-1zM303 390h1v1h-1zM313 390h1v1h-1zM323 390h1v1h-1zM333 390h1v1h-1zM343 390h1v1h-1zM353 390h1v1h-1zM363 390h1v1h-1zM373 390h1v1h-1zM383 390h1v1h-1zM393 390h1v1h-1zM403 390h1v1h-1zM413 390h1v1h-1zM423 390h1v1h-1zM433 390h1v1h-1zM443 390h1v1h-1zM453 390h1v1h-1zM463 390h1v1h-1zM473 390h1v1h-1zM483 390h1v1h-1zM493 390h1v1h-1zM503 390h1v1h-1zM513 390h1v1h-1z"/><rect x="23" y="40" width="501" height="1" fill="#cbc3b5"/><rect x="23" y="440" width="501" height="1" fill="#cbc3b5"/><rect x="23" y="40" width="1" height="401" fill="#cbc3b5"/><rect x="523" y="40" width="1" height="401" fill="#cbc3b5"/><rect x="23" y="240" width="500" height="1" fill="#cbc3b5"/><rect x="273" y="40" width="1" height="400" fill="#cbc3b5"/><path fill="#cbc3b5" d="M33 41h1v4h-1zM33 436h1v4h-1zM33 236h1v9h-1zM43 41h1v4h-1zM43 436h1v4h-1zM43 236h1v9h-1zM53 41h1v4h-1zM53 436h1v4h-1zM53 236h1v9h-1zM63 41h1v4h-1zM63 436h1v4h-1zM63 236h1v9h-1zM73 41h1v9h-1zM73 431h1v9h-1zM73 236h1v9h-1zM83 41h1v4h-1zM83 436h1v4h-1zM83 236h1v9h-1zM93 41h1v4h-1zM93 436h1v4h-1zM93 236h1v9h-1zM103 41h1v4h-1zM103 436h1v4h-1zM103 236h1v9h-1zM113 41h1v4h-1zM113 436h1v4h-1zM113 236h1v9h-1zM123 41h1v9h-1zM123 431h1v9h-1zM123 236h1v9h-1zM133 41h1v4h-1zM133 436h1v4h-1zM133 236h1v9h-1zM143 41h1v4h-1zM143 436h1v4h-1zM143 236h1v9h-1zM153 41h1v4h-1zM153 436h1v4h-1zM153 236h1v9h-1zM163 41h1v4h-1zM163 436h1v4h-1zM163 236h1v9h-1zM173 41h1v9h-1zM173 431h1v9h-1zM173 236h1v9h-1zM183 41h1v4h-1zM183 436h1v4h-1zM183 236h1v9h-1zM193 41h1v4h-1zM193 436h1v4h-1zM193 236h1v9h-1zM203 41h1v4h-1zM203 436h1v4h-1zM203 236h1v9h-1zM213 41h1v4h-1zM213 436h1v4h-1zM213 236h1v9h-1zM223 41h1v9h-1zM223 431h1v9h-1zM223 236h1v9h-1zM233 41h1v4h-1zM233 436h1v4h-1zM233 236h1v9h-1zM243 41h1v4h-1zM243 436h1v4h-1zM243 236h1v9h-1zM253 41h1v4h-1zM253 436h1v4h-1zM253 236h1v9h-1zM263 41h1v4h-1zM263 436h1v4h-1zM263 236h1v9h-1zM273 41h1v9h-1zM273 431h1v9h-1zM273 236h1v9h-1zM283 41h1v4h-1zM283 436h1v4h-1zM283 236h1v9h-1zM293 41h1v4h-1zM293 436h1v4h-1zM293 236h1v9h-1zM303 41h1v4h-1zM303 436h1v4h-1zM303 236h1v9h-1zM313 41h1v4h-1zM313 436h1v4h-1zM313 236h1v9h-1zM323 41h1v9h-1zM323 431h1v9h-1zM323 236h1v9h-1zM333 41h1v4h-1zM333 436h1v4h-1zM333 236h1v9h-1zM343 41h1v4h-1zM343 436h1v4h-1zM343 236h1v9h-1zM353 41h1v4h-1zM353 436h1v4h-1zM353 236h1v9h-1zM363 41h1v4h-1zM363 436h1v4h-1zM363 236h1v9h-1zM373 41h1v9h-1zM373 431h1v9h-1zM373 236h1v9h-1zM383 41h1v4h-1zM383 436h1v4h-1zM383 236h1v9h-1zM393 41h1v4h-1zM393 436h1v4h-1zM393 236h1v9h-1zM403 41h1v4h-1zM403 436h1v4h-1zM403 236h1v9h-1zM413 41h1v4h-1zM413 436h1v4h-1zM413 236h1v9h-1zM423 41h1v9h-1zM423 431h1v9h-1zM423 236h1v9h-1zM433 41h1v4h-1zM433 436h1v4h-1zM433 236h1v9h-1zM443 41h1v4h-1zM443 436h1v4h-1zM443 236h1v9h-1zM453 41h1v4h-1zM453 436h1v4h-1zM453 236h1v9h-1zM463 41h1v4h-1zM463 436h1v4h-1zM463 236h1v9h-1zM473 41h1v9h-1zM473 431h1v9h-1zM473 236h1v9h-1zM483 41h1v4h-1zM483 436h1v4h-1zM483 236h1v9h-1zM493 41h1v4h-1zM493 436h1v4h-1zM493 236h1v9h-1zM503 41h1v4h-1zM503 436h1v4h-1zM503 236h1v9h-1zM513 41h1v4h-1zM513 436h1v4h-1zM513 236h1v9h-1zM24 50h4v1h-4zM519 50h4v1h-4zM269 50h9v1h-9zM24 60h4v1h-4zM519 60h4v1h-4zM269 60h9v1h-9zM24 70h4v1h-4zM519 70h4v1h-4zM269 70h9v1h-9zM24 80h4v1h-4zM519 80h4v1h-4zM269 80h9v1h-9zM24 90h9v1h-9zM514 90h9v1h-9zM269 90h9v1h-9zM24 100h4v1h-4zM519 100h4v1h-4zM269 100h9v1h-9zM24 110h4v1h-4zM519 110h4v1h-4zM269 110h9v1h-9zM24 120h4v1h-4zM519 120h4v1h-4zM269 120h9v1h-9zM24 130h4v1h-4zM519 130h4v1h-4zM269 130h9v1h-9zM24 140h9v1h-9zM514 140h9v1h-9zM269 140h9v1h-9zM24 150h4v1h-4zM519 150h4v1h-4zM269 150h9v1h-9zM24 160h4v1h-4zM519 160h4v1h-4zM269 160h9v1h-9zM24 170h4v1h-4zM519 170h4v1h-4zM269 170h9v1h-9zM24 180h4v1h-4zM519 180h4v1h-4zM269 180h9v1h-9zM24 190h9v1h-9zM514 190h9v1h-9zM269 190h9v1h-9zM24 200h4v1h-4zM519 200h4v1h-4zM269 200h9v1h-9zM24 210h4v1h-4zM519 210h4v1h-4zM269 210h9v1h-9zM24 220h4v1h-4zM519 220h4v1h-4zM269 220h9v1h-9zM24 230h4v1h-4zM519 230h4v1h-4zM269 230h9v1h-9zM24 240h9v1h-9zM514 240h9v1h-9zM269 240h9v1h-9zM24 250h4v1h-4zM519 250h4v1h-4zM269 250h9v1h-9zM24 260h4v1h-4zM519 260h4v1h-4zM269 260h9v1h-9zM24 270h4v1h-4zM519 270h4v1h-4zM269 270h9v1h-9zM24 280h4v1h-4zM519 280h4v1h-4zM269 280h9v1h-9zM24 290h9v1h-9zM514 290h9v1h-9zM269 290h9v1h-9zM24 300h4v1h-4zM519 300h4v1h-4zM269 300h9v1h-9zM24 310h4v1h-4zM519 310h4v1h-4zM269 310h9v1h-9zM24 320h4v1h-4zM519 320h4v1h-4zM269 320h9v1h-9zM24 330h4v1h-4zM519 330h4v1h-4zM269 330h9v1h-9zM24 340h9v1h-9zM514 340h9v1h-9zM269 340h9v1h-9zM24 350h4v1h-4zM519 350h4v1h-4zM269 350h9v1h-9zM24 360h4v1h-4zM519 360h4v1h-4zM269 360h9v1h-9zM24 370h4v1h-4zM519 370h4v1h-4zM269 370h9v1h-9zM24 380h4v1h-4zM519 380h4v1h-4zM269 380h9v1h-9zM24 390h9v1h-9zM514 390h9v1h-9zM269 390h9v1h-9zM24 400h4v1h-4zM519 400h4v1h-4zM269 400h9v1h-9zM24 410h4v1h-4zM519 410h4v1h-4zM269 410h9v1h-9zM24 420h4v1h-4zM519 420h4v1h-4zM269 420h9v1h-9zM24 430h4v1h-4zM519 430h4v1h-4zM269 430h9v1h-9z"/>
<path fill="#f0f048" d="M24 63h1v16h-1zM25 78h1v68h-1zM26 141h1v5h-1zM27 138h1v5h-1zM28 138h1v3h-1zM29 138h1v3h-1zM30 138h1v3h-1zM31 137h1v4h-1zM32 137h1v3h-1zM33 138h1v3h-1zM34 138h1v4h-1zM35 138h1v3h-1zM36 137h1v4h-1zM37 135h1v5h-1zM38 135h1v5h-1zM39 137h1v3h-1zM40 130h1v9h-1zM41 119h1v12h-1zM42 108h1v12h-1zM43 98h1v11h-1zM44 86h1v13h-1zM45 76h1v11h-1zM46 66h1v11h-1zM47 66h1v3h-1zM48 65h1v3h-1zM49 65h1v3h-1zM50 65h1v3h-1zM51 64h1v3h-1zM52 64h1v3h-1zM53 63h1v4h-1zM54 62h1v5h-1zM55 63h1v3h-1zM56 62h1v3h-1zM57 63h1v3h-1zM58 62h1v5h-1zM59 63h1v4h-1zM60 62h1v55h-1zM61 116h1v31h-1zM62 139h1v5h-1zM63 138h1v4h-1zM64 139h1v3h-1zM65 138h1v4h-1zM66 137h1v5h-1zM67 137h1v4h-1zM68 137h1v3h-1zM69 137h1v2h-1zM70 135h1v6h-1zM71 136h1v4h-1zM72 137h1v4h-1zM73 137h1v5h-1zM74 137h1v5h-1zM75 135h1v4h-1zM76 124h1v12h-1zM77 113h1v12h-1zM78 102h1v12h-1zM79 91h1v12h-1zM80 81h1v11h-1zM81 70h1v12h-1zM82 64h1v7h-1zM83 64h1v3h-1zM84 63h1v4h-1zM85 64h1v4h-1zM86 63h1v4h-1zM87 63h1v4h-1zM88 65h1v2h-1zM89 64h1v3h-1zM90 64h1v3h-1zM91 63h1v4h-1zM92 62h1v4h-1zM93 62h1v5h-1zM94 63h1v4h-1zM95 64h1v24h-1zM96 87h1v58h-1zM97 139h1v6h-1zM98 138h1v4h-1zM99 138h1v5h-1zM100 139h1v3h-1zM101 138h1v4h-1zM102 138h1v4h-1zM103 138h1v5h-1zM104 138h1v3h-1zM105 136h1v5h-1zM106 137h1v4h-1zM107 138h1v3h-1zM108 137h1v4h-1zM109 137h1v4h-1zM110 137h1v5h-1zM111 129h1v12h-1zM112 118h1v12h-1zM113 107h1v12h-1zM114 96h1v12h-1zM115 85h1v12h-1zM116 75h1v11h-1zM117 66h1v10h-1zM118 65h1v3h-1zM119 64h1v4h-1zM120 64h1v3h-1zM121 62h1v5h-1zM122 64h1v4h-1zM123 64h1v4h-1zM124 64h1v3h-1zM125 63h1v5h-1zM126 64h1v4h-1zM127 63h1v4h-1zM128 63h1v4h-1zM129 63h1v3h-1zM130 61h1v4h-1zM131 61h1v63h-1zM132 123h1v24h-1zM133 140h1v3h-1zM134 138h1v5h-1zM135 139h1v4h-1zM136 139h1v3h-1zM137 139h1v3h-1zM138 138h1v3h-1zM139 137h1v4h-1zM140 138h1v3h-1zM141 136h1v5h-1zM142 134h1v7h-1zM143 136h1v4h-1zM144 136h1v3h-1zM145 135h1v4h-1zM146 133h1v5h-1zM147 123h1v11h-1zM148 111h1v13h-1zM149 101h1v11h-1zM150 90h1v12h-1zM151 79h1v12h-1zM152 68h1v12h-1zM153 65h1v4h-1zM154 65h1v4h-1zM155 65h1v3h-1zM156 65h1v3h-1zM157 64h1v4h-1zM158 63h1v4h-1zM159 64h1v4h-1zM160 63h1v4h-1zM161 64h1v4h-1zM162 63h1v3h-1zM163 63h1v4h-1zM164 63h1v4h-1zM165 63h1v4h-1zM166 62h1v34h-1zM167 95h1v52h-1zM168 141h1v4h-1zM169 139h1v3h-1zM170 139h1v4h-1zM171 139h1v3h-1zM172 139h1v3h-1zM173 138h1v3h-1zM174 138h1v2h-1zM175 137h1v3h-1zM176 136h1v4h-1zM177 136h1v4h-1zM178 137h1v3h-1zM179 138h1v4h-1zM180 135h1v7h-1zM181 136h1v3h-1zM182 127h1v11h-1zM183 116h1v12h-1zM184 105h1v12h-1zM185 95h1v11h-1zM186 85h1v11h-1zM187 73h1v13h-1zM188 66h1v8h-1zM189 66h1v2h-1zM190 64h1v5h-1zM191 65h1v4h-1zM192 64h1v3h-1zM193 65h1v3h-1zM194 64h1v3h-1zM195 63h1v4h-1zM196 64h1v3h-1zM197 65h1v3h-1zM198 64h1v4h-1zM199 64h1v4h-1zM200 64h1v4h-1zM201 63h1v4h-1zM202 65h1v68h-1zM203 132h1v15h-1zM204 138h1v5h-1zM205 137h1v5h-1zM206 138h1v3h-1zM207 139h1v3h-1zM208 139h1v3h-1zM209 138h1v4h-1zM210 138h1v3h-1zM211 137h1v4h-1zM212 137h1v3h-1zM213 135h1v5h-1zM214 135h1v4h-1zM215 137h1v3h-1zM216 136h1v3h-1zM217 132h1v9h-1zM218 121h1v12h-1zM219 111h1v11h-1zM220 100h1v12h-1zM221 89h1v12h-1zM222 78h1v12h-1zM223 67h1v12h-1zM224 65h1v4h-1zM225 64h1v4h-1zM226 64h1v3h-1zM227 63h1v4h-1zM228 64h1v3h-1zM229 64h1v4h-1zM230 63h1v4h-1zM231 63h1v3h-1zM232 62h1v4h-1zM233 62h1v5h-1zM234 63h1v4h-1zM235 61h1v6h-1zM236 63h1v4h-1zM237 64h1v39h-1zM238 102h1v44h-1zM239 140h1v6h-1zM240 140h1v4h-1zM241 138h1v6h-1zM242 138h1v4h-1zM243 137h1v4h-1zM244 139h1v2h-1zM245 137h1v4h-1zM246 137h1v5h-1zM247 138h1v3h-1zM248 138h1v3h-1zM249 136h1v5h-1zM250 136h1v4h-1zM251 135h1v5h-1zM252 135h1v4h-1zM253 126h1v12h-1zM254 115h1v12h-1zM255 104h1v12h-1zM256 93h1v12h-1zM257 83h1v11h-1zM258 72h1v12h-1zM259 66h1v7h-1zM260 65h1v5h-1zM261 63h1v5h-1zM262 63h1v4h-1zM263 63h1v5h-1zM264 63h1v3h-1zM265 64h1v3h-1zM266 63h1v4h-1zM267 62h1v4h-1zM268 63h1v3h-1zM269 62h1v4h-1zM270 63h1v4h-1zM271 63h1v3h-1zM272 63h1v11h-1zM273 73h1v68h-1zM274 140h1v7h-1zM275 140h1v3h-1zM276 138h1v5h-1zM277 139h1v2h-1zM278 138h1v4h-1zM279 137h1v5h-1zM280 137h1v4h-1zM281 138h1v4h-1zM282 138h1v3h-1zM283 137h1v4h-1zM284 137h1v4h-1zM285 137h1v4h-1zM286 137h1v3h-1zM287 137h1v3h-1zM288 131h1v8h-1zM289 120h1v12h-1zM290 109h1v12h-1zM291 98h1v12h-1zM292 88h1v11h-1zM293 77h1v12h-1zM294 66h1v12h-1zM295 64h1v4h-1zM296 63h1v5h-1zM297 64h1v4h-1zM298 64h1v5h-1zM299 64h1v4h-1zM300 63h1v5h-1zM301 64h1v4h-1zM302 65h1v3h-1zM303 63h1v5h-1zM304 63h1v4h-1zM305 63h1v3h-1zM306 62h1v4h-1zM307 62h1v5h-1zM308 62h1v49h-1zM309 110h1v37h-1zM310 140h1v4h-1zM311 138h1v4h-1zM312 139h1v4h-1zM313 137h1v5h-1zM314 138h1v4h-1zM315 138h1v4h-1zM316 136h1v5h-1zM317 137h1v3h-1zM318 137h1v3h-1zM319 137h1v3h-1zM320 137h1v4h-1zM321 136h1v4h-1zM322 136h1v3h-1zM323 135h1v5h-1zM324 125h1v11h-1zM325 114h1v12h-1zM326 103h1v12h-1zM327 92h1v12h-1zM328 81h1v12h-1zM329 71h1v11h-1zM330 65h1v7h-1zM331 64h1v3h-1zM332 64h1v2h-1zM333 64h1v3h-1zM334 64h1v6h-1zM335 64h1v3h-1zM336 63h1v5h-1zM337 63h1v4h-1zM338 63h1v4h-1zM339 64h1v4h-1zM340 63h1v4h-1zM341 62h1v4h-1zM342 62h1v4h-1zM343 63h1v19h-1zM344 81h1v64h-1zM345 141h1v4h-1zM346 138h1v5h-1zM347 137h1v5h-1zM348 138h1v5h-1zM349 138h1v4h-1zM350 137h1v6h-1zM351 138h1v4h-1zM352 138h1v6h-1zM353 137h1v4h-1zM354 136h1v5h-1zM355 137h1v2h-1zM356 136h1v3h-1zM357 136h1v4h-1zM358 137h1v4h-1zM359 130h1v9h-1zM360 119h1v12h-1zM361 108h1v12h-1zM362 97h1v12h-1zM363 86h1v12h-1zM364 75h1v12h-1zM365 65h1v11h-1zM366 64h1v3h-1zM367 63h1v4h-1zM368 63h1v4h-1zM369 64h1v6h-1zM370 64h1v3h-1zM371 62h1v7h-1zM372 63h1v6h-1zM373 63h1v3h-1zM374 63h1v5h-1zM375 64h1v3h-1zM376 63h1v3h-1zM377 62h1v5h-1zM378 62h1v3h-1zM379 63h1v56h-1zM380 118h1v29h-1zM381 139h1v5h-1zM382 140h1v4h-1zM383 139h1v4h-1zM384 139h1v4h-1zM385 139h1v4h-1zM386 138h1v3h-1zM387 137h1v5h-1zM388 137h1v4h-1zM389 137h1v4h-1zM390 137h1v3h-1zM391 137h1v4h-1zM392 135h1v6h-1zM393 137h1v3h-1zM394 134h1v6h-1zM395 124h1v11h-1zM396 113h1v12h-1zM397 102h1v12h-1zM398 91h1v12h-1zM399 80h1v12h-1zM400 69h1v12h-1zM401 64h1v6h-1zM402 65h1v3h-1zM403 64h1v4h-1zM404 64h1v3h-1zM405 63h1v3h-1zM406 63h1v3h-1zM407 64h1v3h-1zM408 63h1v5h-1zM409 65h1v4h-1zM410 64h1v3h-1zM411 65h1v2h-1zM412 63h1v4h-1zM413 63h1v4h-1zM414 64h1v26h-1zM415 89h1v57h-1zM416 139h1v6h-1zM417 138h1v4h-1zM418 139h1v3h-1zM419 139h1v4h-1zM420 138h1v3h-1zM421 138h1v3h-1zM422 137h1v5h-1zM423 138h1v4h-1zM424 138h1v3h-1zM425 137h1v4h-1zM426 137h1v4h-1zM427 136h1v5h-1zM428 135h1v6h-1zM429 135h1v6h-1zM430 128h1v11h-1zM431 117h1v12h-1zM432 107h1v11h-1zM433 96h1v12h-1zM434 84h1v13h-1zM435 74h1v11h-1zM436 65h1v10h-1zM437 64h1v5h-1zM438 64h1v5h-1zM439 63h1v6h-1zM440 64h1v5h-1zM441 63h1v4h-1zM442 63h1v4h-1zM443 64h1v4h-1zM444 63h1v4h-1zM445 64h1v3h-1zM446 62h1v4h-1zM447 62h1v4h-1zM448 62h1v6h-1zM449 62h1v4h-1zM450 65h1v62h-1zM451 126h1v20h-1zM452 139h1v5h-1zM453 140h1v4h-1zM454 138h1v4h-1zM455 138h1v3h-1zM456 137h1v3h-1zM457 137h1v4h-1zM458 138h1v3h-1zM459 138h1v3h-1zM460 138h1v3h-1zM461 137h1v4h-1zM462 137h1v3h-1zM463 137h1v3h-1zM464 137h1v3h-1zM465 133h1v8h-1zM466 122h1v12h-1zM467 112h1v11h-1zM468 101h1v12h-1zM469 90h1v12h-1zM470 79h1v12h-1zM471 68h1v12h-1zM472 65h1v4h-1zM473 65h1v3h-1zM474 64h1v5h-1zM475 65h1v2h-1zM476 64h1v3h-1zM477 64h1v3h-1zM478 63h1v4h-1zM479 62h1v5h-1zM480 62h1v4h-1zM481 63h1v4h-1zM482 62h1v6h-1zM483 64h1v4h-1zM484 63h1v3h-1zM485 62h1v36h-1zM486 97h1v47h-1zM487 139h1v5h-1zM488 139h1v3h-1zM489 139h1v4h-1zM490 139h1v3h-1zM491 139h1v4h-1zM492 137h1v4h-1zM493 138h1v3h-1zM494 137h1v4h-1zM495 138h1v3h-1zM496 137h1v3h-1zM497 136h1v5h-1zM498 136h1v4h-1zM499 136h1v3h-1zM500 136h1v4h-1zM501 127h1v12h-1zM502 116h1v12h-1zM503 105h1v12h-1zM504 94h1v12h-1zM505 84h1v11h-1zM506 73h1v12h-1zM507 65h1v9h-1zM508 65h1v3h-1zM509 65h1v3h-1zM510 64h1v3h-1zM511 65h1v3h-1zM512 64h1v3h-1zM513 64h1v3h-1zM514 64h1v3h-1zM515 63h1v4h-1zM516 62h1v3h-1zM517 63h1v4h-1zM518 63h1v5h-1zM519 63h1v4h-1zM520 63h1v5h-1zM521 67h1v68h-1zM522 134h1v11h-1z"/><path fill="#4fd6cc" d="M24 218h1v4h-1zM25 218h1v80h-1zM26 294h1v3h-1zM27 292h1v4h-1zM28 291h1v3h-1zM29 289h1v4h-1zM30 290h1v3h-1zM31 288h1v4h-1zM32 288h1v4h-1zM33 288h1v4h-1zM34 290h1v3h-1zM35 288h1v5h-1zM36 289h1v4h-1zM37 289h1v4h-1zM38 289h1v2h-1zM39 288h1v3h-1zM40 286h1v4h-1zM41 275h1v12h-1zM42 262h1v14h-1zM43 249h1v14h-1zM44 242h1v8h-1zM45 239h1v4h-1zM46 237h1v3h-1zM47 235h1v3h-1zM48 233h1v4h-1zM49 231h1v3h-1zM50 229h1v3h-1zM51 229h1v2h-1zM52 226h1v5h-1zM53 226h1v3h-1zM54 224h1v4h-1zM55 223h1v3h-1zM56 222h1v3h-1zM57 221h1v3h-1zM58 219h1v5h-1zM59 218h1v4h-1zM60 218h1v50h-1zM61 267h1v30h-1zM62 291h1v4h-1zM63 291h1v3h-1zM64 289h1v4h-1zM65 288h1v4h-1zM66 289h1v4h-1zM67 288h1v5h-1zM68 288h1v5h-1zM69 289h1v4h-1zM70 290h1v3h-1zM71 289h1v4h-1zM72 288h1v4h-1zM73 288h1v4h-1zM74 287h1v4h-1zM75 286h1v4h-1zM76 280h1v9h-1zM77 267h1v14h-1zM78 252h1v16h-1zM79 244h1v9h-1zM80 238h1v8h-1zM81 238h1v4h-1zM82 236h1v3h-1zM83 233h1v4h-1zM84 231h1v4h-1zM85 230h1v3h-1zM86 228h1v3h-1zM87 227h1v3h-1zM88 226h1v3h-1zM89 225h1v4h-1zM90 224h1v3h-1zM91 221h1v4h-1zM92 222h1v2h-1zM93 220h1v4h-1zM94 219h1v4h-1zM95 218h1v11h-1zM96 228h1v68h-1zM97 294h1v4h-1zM98 291h1v6h-1zM99 289h1v6h-1zM100 289h1v5h-1zM101 288h1v4h-1zM102 288h1v4h-1zM103 289h1v4h-1zM104 288h1v5h-1zM105 288h1v4h-1zM106 289h1v3h-1zM107 288h1v3h-1zM108 289h1v3h-1zM109 289h1v3h-1zM110 287h1v3h-1zM111 286h1v3h-1zM112 274h1v13h-1zM113 259h1v16h-1zM114 248h1v12h-1zM115 240h1v9h-1zM116 237h1v5h-1zM117 235h1v3h-1zM118 234h1v3h-1zM119 232h1v3h-1zM120 230h1v4h-1zM121 229h1v3h-1zM122 227h1v3h-1zM123 227h1v3h-1zM124 226h1v3h-1zM125 224h1v4h-1zM126 222h1v5h-1zM127 222h1v3h-1zM128 219h1v5h-1zM129 219h1v4h-1zM130 218h1v3h-1zM131 217h1v62h-1zM132 278h1v20h-1zM133 293h1v3h-1zM134 292h1v4h-1zM135 290h1v3h-1zM136 289h1v4h-1zM137 289h1v4h-1zM138 289h1v4h-1zM139 289h1v3h-1zM140 289h1v4h-1zM141 289h1v3h-1zM142 290h1v2h-1zM143 289h1v3h-1zM144 289h1v4h-1zM145 288h1v3h-1zM146 287h1v3h-1zM147 279h1v10h-1zM148 267h1v13h-1zM149 251h1v17h-1zM150 244h1v8h-1zM151 238h1v8h-1zM152 237h1v4h-1zM153 234h1v5h-1zM154 232h1v5h-1zM155 230h1v4h-1zM156 228h1v4h-1zM157 228h1v3h-1zM158 226h1v5h-1zM159 226h1v3h-1zM160 224h1v4h-1zM161 223h1v4h-1zM162 222h1v4h-1zM163 222h1v4h-1zM164 221h1v3h-1zM165 219h1v4h-1zM166 218h1v22h-1zM167 239h1v59h-1zM168 295h1v2h-1zM169 292h1v4h-1zM170 291h1v3h-1zM171 290h1v3h-1zM172 290h1v2h-1zM173 291h1v2h-1zM174 290h1v3h-1zM175 289h1v4h-1zM176 289h1v3h-1zM177 289h1v3h-1zM178 288h1v4h-1zM179 290h1v3h-1zM180 288h1v3h-1zM181 287h1v3h-1zM182 284h1v5h-1zM183 272h1v13h-1zM184 257h1v16h-1zM185 245h1v13h-1zM186 239h1v8h-1zM187 238h1v4h-1zM188 235h1v5h-1zM189 234h1v4h-1zM190 232h1v4h-1zM191 230h1v3h-1zM192 228h1v4h-1zM193 227h1v4h-1zM194 227h1v4h-1zM195 226h1v3h-1zM196 224h1v4h-1zM197 224h1v2h-1zM198 223h1v3h-1zM199 221h1v3h-1zM200 220h1v3h-1zM201 218h1v3h-1zM202 218h1v71h-1zM203 288h1v9h-1zM204 292h1v3h-1zM205 290h1v6h-1zM206 289h1v4h-1zM207 289h1v2h-1zM208 289h1v4h-1zM209 288h1v5h-1zM210 288h1v3h-1zM211 289h1v3h-1zM212 289h1v3h-1zM213 289h1v4h-1zM214 289h1v3h-1zM215 289h1v3h-1zM216 288h1v3h-1zM217 287h1v3h-1zM218 278h1v11h-1zM219 264h1v16h-1zM220 250h1v15h-1zM221 243h1v8h-1zM222 239h1v6h-1zM223 237h1v4h-1zM224 235h1v4h-1zM225 232h1v4h-1zM226 230h1v3h-1zM227 226h1v6h-1zM228 226h1v4h-1zM229 226h1v4h-1zM230 226h1v3h-1zM231 225h1v3h-1zM232 224h1v3h-1zM233 222h1v4h-1zM234 222h1v2h-1zM235 219h1v4h-1zM236 217h1v5h-1zM237 217h1v34h-1zM238 250h1v47h-1zM239 293h1v5h-1zM240 292h1v4h-1zM241 290h1v4h-1zM242 289h1v4h-1zM243 289h1v2h-1zM244 289h1v3h-1zM245 288h1v4h-1zM246 289h1v3h-1zM247 288h1v4h-1zM248 289h1v4h-1zM249 289h1v5h-1zM250 289h1v4h-1zM251 289h1v3h-1zM252 288h1v3h-1zM253 283h1v6h-1zM254 270h1v14h-1zM255 256h1v16h-1zM256 246h1v11h-1zM257 240h1v7h-1zM258 237h1v5h-1zM259 236h1v4h-1zM260 233h1v4h-1zM261 232h1v4h-1zM262 230h1v3h-1zM263 228h1v4h-1zM264 228h1v3h-1zM265 227h1v3h-1zM266 225h1v4h-1zM267 224h1v3h-1zM268 223h1v4h-1zM269 222h1v4h-1zM270 220h1v4h-1zM271 219h1v4h-1zM272 218h1v3h-1zM273 218h1v79h-1zM274 294h1v3h-1zM275 291h1v5h-1zM276 291h1v3h-1zM277 288h1v4h-1zM278 287h1v5h-1zM279 289h1v4h-1zM280 290h1v4h-1zM281 288h1v5h-1zM282 290h1v3h-1zM283 289h1v4h-1zM284 289h1v4h-1zM285 290h1v3h-1zM286 289h1v3h-1zM287 288h1v3h-1zM288 286h1v4h-1zM289 275h1v13h-1zM290 262h1v14h-1zM291 248h1v15h-1zM292 242h1v8h-1zM293 238h1v5h-1zM294 235h1v4h-1zM295 234h1v4h-1zM296 232h1v4h-1zM297 230h1v3h-1zM298 229h1v3h-1zM299 227h1v4h-1zM300 226h1v3h-1zM301 226h1v3h-1zM302 225h1v3h-1zM303 224h1v3h-1zM304 222h1v3h-1zM305 222h1v2h-1zM306 220h1v3h-1zM307 219h1v2h-1zM308 218h1v43h-1zM309 260h1v37h-1zM310 293h1v2h-1zM311 291h1v4h-1zM312 290h1v3h-1zM313 289h1v3h-1zM314 288h1v3h-1zM315 289h1v3h-1zM316 289h1v3h-1zM317 289h1v4h-1zM318 289h1v3h-1zM319 289h1v4h-1zM320 288h1v5h-1zM321 289h1v3h-1zM322 288h1v3h-1zM323 288h1v3h-1zM324 281h1v9h-1zM325 268h1v14h-1zM326 254h1v15h-1zM327 245h1v10h-1zM328 238h1v8h-1zM329 237h1v4h-1zM330 235h1v4h-1zM331 234h1v3h-1zM332 231h1v4h-1zM333 229h1v4h-1zM334 228h1v3h-1zM335 227h1v2h-1zM336 227h1v2h-1zM337 225h1v4h-1zM338 224h1v4h-1zM339 223h1v3h-1zM340 221h1v4h-1zM341 221h1v2h-1zM342 220h1v3h-1zM343 217h1v5h-1zM344 221h1v76h-1zM345 292h1v5h-1zM346 293h1v3h-1zM347 290h1v5h-1zM348 289h1v4h-1zM349 289h1v5h-1zM350 290h1v3h-1zM351 290h1v3h-1zM352 290h1v3h-1zM353 289h1v3h-1zM354 290h1v3h-1zM355 289h1v3h-1zM356 290h1v4h-1zM357 287h1v4h-1zM358 287h1v4h-1zM359 286h1v3h-1zM360 275h1v12h-1zM361 261h1v15h-1zM362 248h1v14h-1zM363 240h1v9h-1zM364 237h1v4h-1zM365 236h1v3h-1zM366 234h1v4h-1zM367 232h1v4h-1zM368 229h1v6h-1zM369 229h1v2h-1zM370 229h1v2h-1zM371 226h1v4h-1zM372 225h1v3h-1zM373 225h1v3h-1zM374 224h1v3h-1zM375 223h1v3h-1zM376 221h1v3h-1zM377 219h1v4h-1zM378 218h1v3h-1zM379 218h1v54h-1zM380 271h1v28h-1zM381 294h1v3h-1zM382 291h1v5h-1zM383 289h1v4h-1zM384 289h1v3h-1zM385 288h1v3h-1zM386 288h1v4h-1zM387 289h1v4h-1zM388 289h1v4h-1zM389 289h1v4h-1zM390 289h1v4h-1zM391 288h1v4h-1zM392 289h1v2h-1zM393 288h1v3h-1zM394 287h1v3h-1zM395 280h1v9h-1zM396 266h1v15h-1zM397 253h1v14h-1zM398 243h1v11h-1zM399 239h1v5h-1zM400 236h1v5h-1zM401 235h1v4h-1zM402 233h1v4h-1zM403 229h1v6h-1zM404 229h1v4h-1zM405 228h1v2h-1zM406 227h1v3h-1zM407 226h1v3h-1zM408 224h1v3h-1zM409 223h1v4h-1zM410 223h1v3h-1zM411 222h1v3h-1zM412 220h1v4h-1zM413 219h1v4h-1zM414 218h1v15h-1zM415 232h1v65h-1zM416 294h1v4h-1zM417 291h1v4h-1zM418 291h1v3h-1zM419 290h1v2h-1zM420 289h1v4h-1zM421 289h1v4h-1zM422 289h1v4h-1zM423 289h1v3h-1zM424 290h1v2h-1zM425 288h1v4h-1zM426 289h1v4h-1zM427 288h1v4h-1zM428 289h1v3h-1zM429 288h1v2h-1zM430 284h1v6h-1zM431 273h1v12h-1zM432 257h1v17h-1zM433 247h1v11h-1zM434 241h1v8h-1zM435 237h1v6h-1zM436 237h1v3h-1zM437 234h1v4h-1zM438 231h1v4h-1zM439 229h1v4h-1zM440 228h1v3h-1zM441 227h1v3h-1zM442 226h1v3h-1zM443 225h1v3h-1zM444 224h1v4h-1zM445 223h1v3h-1zM446 221h1v4h-1zM447 221h1v3h-1zM448 219h1v4h-1zM449 217h1v4h-1zM450 218h1v64h-1zM451 281h1v17h-1zM452 293h1v4h-1zM453 291h1v4h-1zM454 289h1v4h-1zM455 289h1v3h-1zM456 289h1v3h-1zM457 289h1v3h-1zM458 289h1v4h-1zM459 289h1v4h-1zM460 289h1v3h-1zM461 289h1v3h-1zM462 289h1v5h-1zM463 288h1v4h-1zM464 288h1v3h-1zM465 286h1v4h-1zM466 278h1v11h-1zM467 264h1v15h-1zM468 252h1v13h-1zM469 244h1v9h-1zM470 238h1v7h-1zM471 236h1v5h-1zM472 236h1v2h-1zM473 231h1v6h-1zM474 231h1v3h-1zM475 229h1v4h-1zM476 227h1v4h-1zM477 227h1v4h-1zM478 226h1v4h-1zM479 225h1v3h-1zM480 224h1v3h-1zM481 223h1v3h-1zM482 221h1v4h-1zM483 220h1v4h-1zM484 219h1v4h-1zM485 218h1v26h-1zM486 243h1v54h-1zM487 294h1v3h-1zM488 291h1v4h-1zM489 290h1v4h-1zM490 290h1v4h-1zM491 290h1v4h-1zM492 288h1v4h-1zM493 288h1v4h-1zM494 289h1v4h-1zM495 290h1v3h-1zM496 290h1v3h-1zM497 289h1v4h-1zM498 288h1v5h-1zM499 288h1v3h-1zM500 287h1v4h-1zM501 285h1v4h-1zM502 273h1v13h-1zM503 258h1v16h-1zM504 247h1v12h-1zM505 240h1v8h-1zM506 238h1v4h-1zM507 235h1v4h-1zM508 233h1v3h-1zM509 231h1v5h-1zM510 230h1v4h-1zM511 229h1v3h-1zM512 228h1v4h-1zM513 227h1v3h-1zM514 227h1v2h-1zM515 226h1v2h-1zM516 223h1v4h-1zM517 223h1v3h-1zM518 222h1v3h-1zM519 220h1v4h-1zM520 217h1v4h-1zM521 217h1v76h-1zM522 292h1v6h-1z"/><path fill="#cc38ee" d="M24 363h1v3h-1zM25 363h1v17h-1zM26 379h1v61h-1zM27 437h1v3h-1zM28 438h1v2h-1zM29 437h1v3h-1zM30 438h1v2h-1zM31 437h1v3h-1zM32 437h1v3h-1zM33 437h1v4h-1zM34 437h1v3h-1zM35 437h1v2h-1zM36 437h1v3h-1zM37 437h1v2h-1zM38 438h1v3h-1zM39 437h1v4h-1zM40 438h1v2h-1zM41 437h1v3h-1zM42 430h1v9h-1zM43 400h1v31h-1zM44 374h1v27h-1zM45 369h1v6h-1zM46 365h1v5h-1zM47 365h1v2h-1zM48 363h1v3h-1zM49 364h1v3h-1zM50 363h1v4h-1zM51 363h1v3h-1zM52 364h1v3h-1zM53 364h1v3h-1zM54 364h1v3h-1zM55 363h1v4h-1zM56 362h1v5h-1zM57 364h1v4h-1zM58 363h1v5h-1zM59 361h1v5h-1zM60 364h1v3h-1zM61 365h1v56h-1zM62 420h1v20h-1zM63 437h1v3h-1zM64 437h1v3h-1zM65 436h1v3h-1zM66 436h1v4h-1zM67 437h1v3h-1zM68 438h1v2h-1zM69 438h1v3h-1zM70 437h1v4h-1zM71 437h1v3h-1zM72 436h1v4h-1zM73 437h1v3h-1zM74 436h1v3h-1zM75 436h1v4h-1zM76 437h1v2h-1zM77 437h1v3h-1zM78 413h1v26h-1zM79 383h1v31h-1zM80 370h1v14h-1zM81 366h1v5h-1zM82 365h1v2h-1zM83 364h1v3h-1zM84 363h1v5h-1zM85 363h1v4h-1zM86 363h1v5h-1zM87 362h1v5h-1zM88 362h1v5h-1zM89 364h1v2h-1zM90 363h1v5h-1zM91 363h1v5h-1zM92 363h1v3h-1zM93 363h1v5h-1zM94 364h1v5h-1zM95 365h1v3h-1zM96 364h1v25h-1zM97 388h1v51h-1zM98 437h1v3h-1zM99 437h1v3h-1zM100 437h1v3h-1zM101 436h1v4h-1zM102 436h1v4h-1zM103 436h1v3h-1zM104 436h1v3h-1zM105 437h1v3h-1zM106 436h1v3h-1zM107 437h1v3h-1zM108 437h1v4h-1zM109 437h1v3h-1zM110 437h1v4h-1zM111 437h1v3h-1zM112 437h1v3h-1zM113 427h1v13h-1zM114 396h1v32h-1zM115 373h1v24h-1zM116 367h1v7h-1zM117 365h1v5h-1zM118 364h1v3h-1zM119 364h1v3h-1zM120 363h1v5h-1zM121 363h1v5h-1zM122 363h1v5h-1zM123 364h1v3h-1zM124 364h1v4h-1zM125 363h1v4h-1zM126 363h1v4h-1zM127 363h1v5h-1zM128 364h1v4h-1zM129 364h1v4h-1zM130 364h1v3h-1zM131 363h1v3h-1zM132 363h1v67h-1zM133 429h1v10h-1zM134 437h1v2h-1zM135 436h1v3h-1zM136 436h1v3h-1zM137 436h1v4h-1zM138 437h1v3h-1zM139 436h1v4h-1zM140 437h1v3h-1zM141 437h1v3h-1zM142 437h1v3h-1zM143 438h1v2h-1zM144 437h1v3h-1zM145 437h1v2h-1zM146 437h1v3h-1zM147 437h1v3h-1zM148 436h1v3h-1zM149 410h1v29h-1zM150 379h1v32h-1zM151 370h1v10h-1zM152 367h1v4h-1zM153 364h1v4h-1zM154 363h1v5h-1zM155 363h1v5h-1zM156 364h1v3h-1zM157 363h1v4h-1zM158 363h1v4h-1zM159 364h1v3h-1zM160 364h1v4h-1zM161 364h1v3h-1zM162 365h1v2h-1zM163 364h1v3h-1zM164 364h1v3h-1zM165 364h1v3h-1zM166 365h1v3h-1zM167 363h1v35h-1zM168 397h1v42h-1zM169 436h1v3h-1zM170 436h1v4h-1zM171 437h1v2h-1zM172 436h1v4h-1zM173 436h1v4h-1zM174 437h1v2h-1zM175 436h1v3h-1zM176 437h1v3h-1zM177 437h1v3h-1zM178 437h1v3h-1zM179 437h1v3h-1zM180 437h1v3h-1zM181 437h1v3h-1zM182 438h1v2h-1zM183 438h1v2h-1zM184 424h1v17h-1zM185 392h1v33h-1zM186 373h1v20h-1zM187 367h1v7h-1zM188 366h1v3h-1zM189 365h1v2h-1zM190 364h1v4h-1zM191 362h1v5h-1zM192 363h1v4h-1zM193 362h1v5h-1zM194 363h1v3h-1zM195 364h1v3h-1zM196 364h1v4h-1zM197 364h1v3h-1zM198 363h1v3h-1zM199 362h1v4h-1zM200 362h1v4h-1zM201 364h1v2h-1zM202 364h1v4h-1zM203 365h1v74h-1zM204 437h1v4h-1zM205 436h1v4h-1zM206 438h1v2h-1zM207 438h1v3h-1zM208 437h1v3h-1zM209 437h1v3h-1zM210 437h1v3h-1zM211 437h1v3h-1zM212 438h1v2h-1zM213 437h1v4h-1zM214 437h1v3h-1zM215 436h1v4h-1zM216 436h1v3h-1zM217 436h1v3h-1zM218 436h1v3h-1zM219 436h1v3h-1zM220 406h1v32h-1zM221 376h1v31h-1zM222 369h1v8h-1zM223 366h1v4h-1zM224 365h1v3h-1zM225 364h1v3h-1zM226 363h1v4h-1zM227 364h1v4h-1zM228 364h1v4h-1zM229 363h1v4h-1zM230 363h1v4h-1zM231 363h1v3h-1zM232 364h1v3h-1zM233 363h1v3h-1zM234 364h1v3h-1zM235 362h1v5h-1zM236 363h1v4h-1zM237 364h1v3h-1zM238 365h1v42h-1zM239 406h1v34h-1zM240 437h1v3h-1zM241 436h1v4h-1zM242 436h1v4h-1zM243 437h1v3h-1zM244 437h1v3h-1zM245 438h1v3h-1zM246 437h1v4h-1zM247 437h1v3h-1zM248 437h1v3h-1zM249 437h1v4h-1zM250 437h1v4h-1zM251 438h1v2h-1zM252 438h1v2h-1zM253 437h1v3h-1zM254 437h1v4h-1zM255 420h1v19h-1zM256 389h1v32h-1zM257 371h1v19h-1zM258 367h1v6h-1zM259 365h1v4h-1zM260 364h1v4h-1zM261 364h1v4h-1zM262 363h1v4h-1zM263 364h1v4h-1zM264 363h1v3h-1zM265 363h1v4h-1zM266 364h1v3h-1zM267 363h1v3h-1zM268 362h1v5h-1zM269 363h1v4h-1zM270 364h1v3h-1zM271 364h1v4h-1zM272 364h1v4h-1zM273 364h1v11h-1zM274 374h1v66h-1zM275 437h1v3h-1zM276 437h1v2h-1zM277 437h1v3h-1zM278 437h1v2h-1zM279 437h1v2h-1zM280 436h1v3h-1zM281 436h1v3h-1zM282 436h1v3h-1zM283 436h1v3h-1zM284 436h1v4h-1zM285 437h1v4h-1zM286 437h1v3h-1zM287 437h1v2h-1zM288 436h1v3h-1zM289 436h1v4h-1zM290 433h1v6h-1zM291 402h1v32h-1zM292 375h1v28h-1zM293 369h1v7h-1zM294 365h1v5h-1zM295 365h1v2h-1zM296 364h1v3h-1zM297 363h1v4h-1zM298 363h1v4h-1zM299 363h1v4h-1zM300 363h1v3h-1zM301 362h1v5h-1zM302 364h1v3h-1zM303 362h1v4h-1zM304 363h1v3h-1zM305 364h1v3h-1zM306 363h1v5h-1zM307 363h1v5h-1zM308 362h1v4h-1zM309 365h1v51h-1zM310 415h1v25h-1zM311 437h1v3h-1zM312 437h1v2h-1zM313 437h1v3h-1zM314 437h1v3h-1zM315 437h1v3h-1zM316 437h1v2h-1zM317 436h1v3h-1zM318 436h1v3h-1zM319 437h1v3h-1zM320 437h1v3h-1zM321 437h1v2h-1zM322 437h1v3h-1zM323 437h1v4h-1zM324 438h1v2h-1zM325 437h1v4h-1zM326 416h1v25h-1zM327 385h1v32h-1zM328 371h1v15h-1zM329 367h1v5h-1zM330 365h1v3h-1zM331 364h1v3h-1zM332 364h1v4h-1zM333 363h1v4h-1zM334 363h1v4h-1zM335 364h1v4h-1zM336 365h1v3h-1zM337 364h1v3h-1zM338 364h1v4h-1zM339 365h1v4h-1zM340 365h1v4h-1zM341 365h1v3h-1zM342 363h1v5h-1zM343 363h1v4h-1zM344 363h1v20h-1zM345 382h1v57h-1zM346 436h1v3h-1zM347 437h1v2h-1zM348 437h1v3h-1zM349 437h1v3h-1zM350 437h1v3h-1zM351 436h1v4h-1zM352 436h1v3h-1zM353 436h1v3h-1zM354 437h1v3h-1zM355 437h1v2h-1zM356 437h1v3h-1zM357 437h1v2h-1zM358 437h1v2h-1zM359 436h1v3h-1zM360 436h1v4h-1zM361 430h1v10h-1zM362 398h1v33h-1zM363 374h1v25h-1zM364 368h1v7h-1zM365 365h1v5h-1zM366 364h1v3h-1zM367 363h1v4h-1zM368 363h1v3h-1zM369 363h1v4h-1zM370 365h1v3h-1zM371 364h1v4h-1zM372 363h1v4h-1zM373 363h1v3h-1zM374 364h1v4h-1zM375 364h1v3h-1zM376 363h1v4h-1zM377 363h1v3h-1zM378 364h1v3h-1zM379 363h1v3h-1zM380 365h1v59h-1zM381 423h1v17h-1zM382 437h1v3h-1zM383 437h1v3h-1zM384 436h1v4h-1zM385 437h1v3h-1zM386 437h1v3h-1zM387 437h1v3h-1zM388 436h1v4h-1zM389 437h1v2h-1zM390 437h1v3h-1zM391 437h1v3h-1zM392 437h1v3h-1zM393 436h1v3h-1zM394 437h1v3h-1zM395 437h1v3h-1zM396 437h1v3h-1zM397 412h1v27h-1zM398 381h1v32h-1zM399 370h1v12h-1zM400 366h1v6h-1zM401 365h1v3h-1zM402 363h1v4h-1zM403 363h1v4h-1zM404 364h1v4h-1zM405 363h1v4h-1zM406 364h1v4h-1zM407 364h1v3h-1zM408 365h1v4h-1zM409 364h1v2h-1zM410 364h1v4h-1zM411 364h1v3h-1zM412 364h1v3h-1zM413 365h1v3h-1zM414 365h1v4h-1zM415 363h1v30h-1zM416 392h1v48h-1zM417 437h1v4h-1zM418 437h1v3h-1zM419 437h1v2h-1zM420 437h1v2h-1zM421 436h1v3h-1zM422 436h1v3h-1zM423 436h1v3h-1zM424 435h1v5h-1zM425 436h1v3h-1zM426 436h1v3h-1zM427 437h1v2h-1zM428 437h1v3h-1zM429 438h1v3h-1zM430 437h1v3h-1zM431 438h1v1h-1zM432 426h1v14h-1zM433 395h1v32h-1zM434 372h1v24h-1zM435 368h1v6h-1zM436 366h1v3h-1zM437 365h1v3h-1zM438 363h1v3h-1zM439 363h1v4h-1zM440 364h1v3h-1zM441 364h1v4h-1zM442 364h1v4h-1zM443 362h1v6h-1zM444 363h1v3h-1zM445 363h1v4h-1zM446 363h1v3h-1zM447 363h1v4h-1zM448 363h1v3h-1zM449 362h1v5h-1zM450 363h1v3h-1zM451 364h1v69h-1zM452 432h1v7h-1zM453 437h1v3h-1zM454 437h1v3h-1zM455 437h1v3h-1zM456 437h1v3h-1zM457 437h1v4h-1zM458 437h1v3h-1zM459 437h1v3h-1zM460 437h1v3h-1zM461 436h1v3h-1zM462 436h1v4h-1zM463 437h1v3h-1zM464 436h1v4h-1zM465 436h1v3h-1zM466 436h1v4h-1zM467 437h1v3h-1zM468 409h1v31h-1zM469 378h1v32h-1zM470 369h1v10h-1zM471 367h1v4h-1zM472 365h1v4h-1zM473 365h1v4h-1zM474 364h1v3h-1zM475 364h1v5h-1zM476 365h1v3h-1zM477 363h1v5h-1zM478 364h1v4h-1zM479 365h1v4h-1zM480 364h1v3h-1zM481 363h1v4h-1zM482 365h1v2h-1zM483 364h1v3h-1zM484 363h1v5h-1zM485 362h1v3h-1zM486 362h1v39h-1zM487 400h1v39h-1zM488 436h1v4h-1zM489 436h1v4h-1zM490 437h1v3h-1zM491 436h1v3h-1zM492 437h1v3h-1zM493 436h1v4h-1zM494 437h1v3h-1zM495 437h1v3h-1zM496 437h1v2h-1zM497 437h1v3h-1zM498 437h1v3h-1zM499 437h1v2h-1zM500 437h1v2h-1zM501 437h1v3h-1zM502 437h1v3h-1zM503 422h1v18h-1zM504 391h1v32h-1zM505 372h1v20h-1zM506 367h1v6h-1zM507 365h1v4h-1zM508 364h1v4h-1zM509 363h1v5h-1zM510 364h1v4h-1zM511 364h1v3h-1zM512 364h1v4h-1zM513 364h1v3h-1zM514 364h1v4h-1zM515 363h1v4h-1zM516 363h1v3h-1zM517 363h1v3h-1zM518 362h1v6h-1zM519 363h1v3h-1zM520 363h1v4h-1zM521 363h1v6h-1zM522 368h1v70h-1z"/>
</g>
<g>
<rect x="2" y="137" width="22" height="14" fill="#f0f000"/><path d="M11.5 141v8.5M9 143.5l2.5-2.5" stroke="#000" stroke-width="1.2" fill="none"/><path d="M16 144.5h4" stroke="#000" stroke-width="1.2" fill="none"/><path d="M18.5 141.5l3.5 3l-3.5 3z" fill="#000"/><path d="M16 294.5h5M19 292.5l2 2l-2 2" stroke="#4fd6cc" stroke-width="1.3" fill="none"/><path d="M19 434v6M17 438l2 2l2 -2" stroke="#cc38ee" stroke-width="1.3" fill="none"/><path d="M63 41h11l-5.5 5z" fill="#e87050"/><path d="M510 99.5l4-3.5v7z" fill="#f0f048"/><rect x="513" y="99" width="9" height="1" fill="#f0f048"/><path d="M361.5 465.5h1.5l3.5-5.5h1.5" stroke="#f0f0f0" stroke-width="1" fill="none"/>
</g>
<g>
<text x="18.0" y="17" font-size="13" fill="#000" font-weight="normal" textLength="19.0" lengthAdjust="spacingAndGlyphs">Vert</text><text x="63.60000000000002" y="17" font-size="13" fill="#000" font-weight="normal" textLength="25.5" lengthAdjust="spacingAndGlyphs">Horiz</text><text x="118.80000000000001" y="17" font-size="13" fill="#000" font-weight="normal" textLength="17.6" lengthAdjust="spacingAndGlyphs">Trig</text><text x="170.60000000000002" y="17" font-size="13" fill="#000" font-weight="normal" textLength="22.2" lengthAdjust="spacingAndGlyphs">Disp</text><text x="215.39999999999998" y="17" font-size="13" fill="#000" font-weight="normal" textLength="35.0" lengthAdjust="spacingAndGlyphs">Cursors</text><text x="270.20000000000005" y="17" font-size="13" fill="#000" font-weight="normal" textLength="27.1" lengthAdjust="spacingAndGlyphs">Meas</text><text x="319.0" y="17" font-size="13" fill="#000" font-weight="normal" textLength="31.0" lengthAdjust="spacingAndGlyphs">Masks</text><text x="373.20000000000005" y="17" font-size="13" fill="#000" font-weight="normal" textLength="24.6" lengthAdjust="spacingAndGlyphs">Math</text><text x="428.5999999999999" y="17" font-size="13" fill="#000" font-weight="normal" textLength="26.1" lengthAdjust="spacingAndGlyphs">Save</text><text x="477.4000000000001" y="17" font-size="13" fill="#000" font-weight="normal" textLength="30.5" lengthAdjust="spacingAndGlyphs">Recall</text><text x="528.5999999999999" y="17" font-size="13" fill="#000" font-weight="normal" textLength="45.6" lengthAdjust="spacingAndGlyphs">MyScope</text><text x="595.5999999999999" y="17" font-size="13" fill="#000" font-weight="normal" textLength="22.9" lengthAdjust="spacingAndGlyphs">Help</text><text x="599.8000000000002" y="45" font-size="12" fill="#000" font-weight="normal" textLength="27.3" lengthAdjust="spacingAndGlyphs">Menu</text><text x="3.1999999999999993" y="36.5" font-size="11" fill="#e8f0f8" font-weight="normal" textLength="16.8" lengthAdjust="spacingAndGlyphs">Tek</text><text x="40.0" y="36.5" font-size="11" fill="#b8cce6" font-weight="normal" textLength="36.0" lengthAdjust="spacingAndGlyphs">Preview</text><text x="85.39999999999998" y="36.5" font-size="11" fill="#b8cce6" font-weight="normal" textLength="50.6" lengthAdjust="spacingAndGlyphs">Single Seq</text><text x="200.39999999999998" y="36.5" font-size="11" fill="#b8cce6" font-weight="normal" textLength="30.4" lengthAdjust="spacingAndGlyphs">0 Acqs</text><text x="400.20000000000005" y="36.5" font-size="11" fill="#b8cce6" font-weight="normal" textLength="91.8" lengthAdjust="spacingAndGlyphs">08 Sep 15 18:03:34</text><text x="542.0" y="75.3" font-size="13" fill="#dfeafa" font-weight="bold" textLength="80.0" lengthAdjust="spacingAndGlyphs">Ch4 Position</text><text x="563.0" y="96" font-size="11" fill="#e8f0f8" font-weight="normal" textLength="38.4" lengthAdjust="spacingAndGlyphs">-3.64div</text><text x="552.0" y="127.2" font-size="13" fill="#dfeafa" font-weight="bold" textLength="60.0" lengthAdjust="spacingAndGlyphs">Ch4 Scale</text><text x="572.0" y="147.8" font-size="11" fill="#e8f0f8" font-weight="normal" textLength="21.0" lengthAdjust="spacingAndGlyphs">1.0V</text><text x="9" y="300" font-size="11" fill="#4fd6cc" font-weight="normal">2</text><text x="11.3" y="440" font-size="10" fill="#cc38ee" font-weight="normal">3</text><text x="76.60000000000002" y="59.4" font-size="11" fill="#ffffff" font-weight="normal" textLength="31.5" lengthAdjust="spacingAndGlyphs">SCL_in</text><text x="69.19999999999999" y="200" font-size="11" fill="#ffffff" font-weight="normal" textLength="44.4" lengthAdjust="spacingAndGlyphs">SCL_out1</text><text x="67.0" y="359" font-size="11" fill="#ffffff" font-weight="normal" textLength="46.1" lengthAdjust="spacingAndGlyphs">SCL_out2</text><text x="23.0" y="454.5" font-size="11" fill="#ecec9a" font-weight="normal" textLength="18.1" lengthAdjust="spacingAndGlyphs">Ch1</text><text x="63.60000000000002" y="454.5" font-size="11" fill="#ecec9a" font-weight="normal" textLength="20.4" lengthAdjust="spacingAndGlyphs">2.0V</text><text x="23.0" y="466" font-size="11" fill="#c848e8" font-weight="normal" textLength="18.0" lengthAdjust="spacingAndGlyphs">Ch3</text><text x="63.60000000000002" y="466" font-size="11" fill="#c848e8" font-weight="normal" textLength="20.4" lengthAdjust="spacingAndGlyphs">2.0V</text><text x="173.0" y="454.5" font-size="11" fill="#5cd0d0" font-weight="normal" textLength="18.1" lengthAdjust="spacingAndGlyphs">Ch2</text><text x="213.60000000000002" y="454.5" font-size="11" fill="#5cd0d0" font-weight="normal" textLength="20.4" lengthAdjust="spacingAndGlyphs">2.0V</text><text x="323.0" y="454.5" font-size="11" fill="#f0f0f0" font-weight="normal" textLength="82.0" lengthAdjust="spacingAndGlyphs">M 4.0µs 125MS/s</text><text x="432.0" y="454.5" font-size="11" fill="#f0f0f0" font-weight="normal" textLength="37.0" lengthAdjust="spacingAndGlyphs">8.0ns/pt</text><text x="324" y="466" font-size="11" fill="#f0f0f0" font-weight="normal">A</text><text x="336.0" y="466" font-size="11" fill="#ecec9a" font-weight="normal" textLength="18.3" lengthAdjust="spacingAndGlyphs">Ch1</text><text x="374.4000000000001" y="466" font-size="11" fill="#f0f0f0" font-weight="normal" textLength="19.7" lengthAdjust="spacingAndGlyphs">1.8V</text>
</g>
</svg>
</body></html>
